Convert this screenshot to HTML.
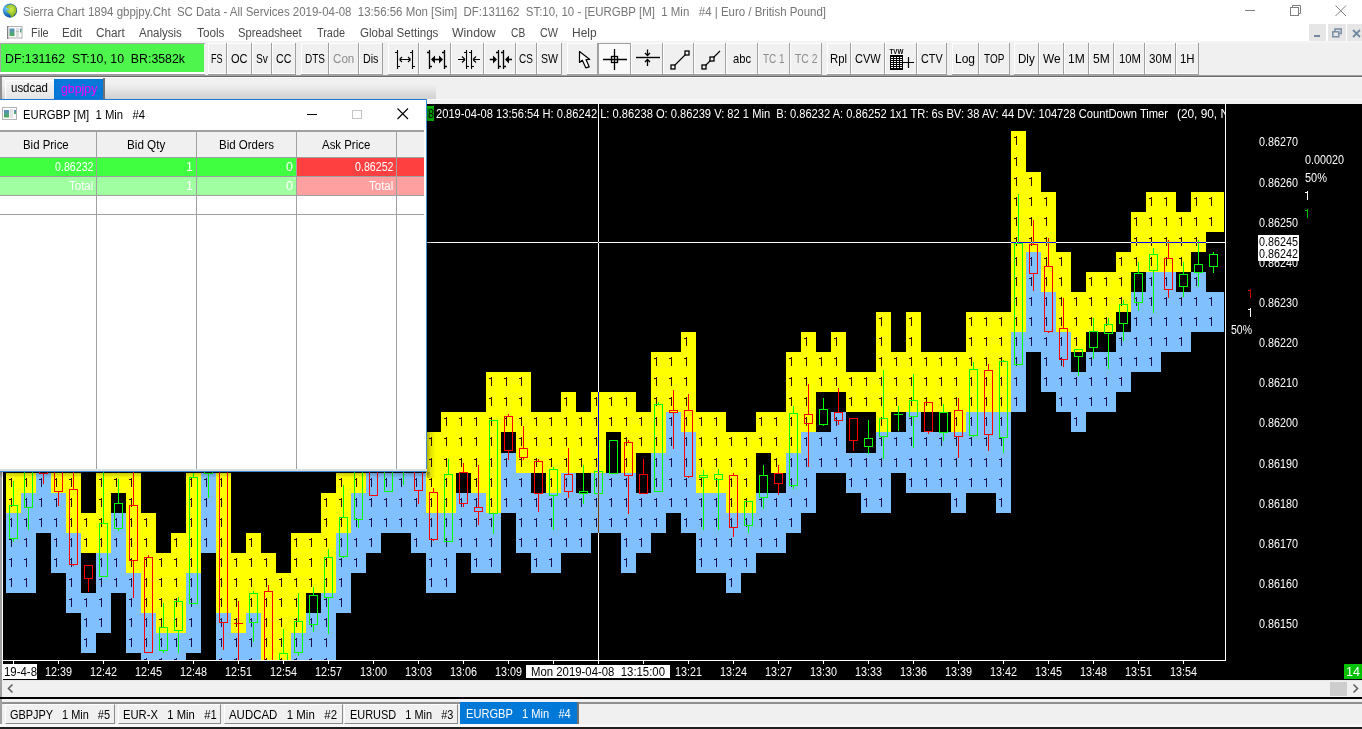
<!DOCTYPE html>
<html><head><meta charset="utf-8"><style>
html,body{margin:0;padding:0;width:1362px;height:729px;overflow:hidden;background:#f0f0f0;font-family:"Liberation Sans",sans-serif;}
div{font-family:"Liberation Sans",sans-serif;}
</style></head><body>
<div style="position:absolute;left:0px;top:0px;width:1362px;height:22px;background:#fff;"></div>
<svg style="position:absolute;left:2px;top:3px" width="16" height="16" viewBox="0 0 16 16"><defs><radialGradient id="gl" cx="0.3" cy="0.35" r="0.75"><stop offset="0" stop-color="#7fd8ff"/><stop offset="0.55" stop-color="#1f78c8"/><stop offset="1" stop-color="#0b3f8f"/></radialGradient><radialGradient id="gg" cx="0.5" cy="0.4" r="0.6"><stop offset="0" stop-color="#d4f050"/><stop offset="1" stop-color="#7aa818"/></radialGradient></defs><circle cx="8" cy="7.6" r="7.1" fill="url(#gl)"/><path d="M4 3.2Q7 0.8 11 1.6Q14.6 3.8 14.6 7.2Q14.2 10.5 12 12.5Q10.5 14.6 9.2 14.2Q8.5 12 7.2 10.5Q5.2 9.8 4.4 8Q5.8 6.4 7.6 6.8Q7 5 5.4 5.2Q4.2 4.6 4 3.2Z" fill="url(#gg)"/></svg>
<div id="title" style="position:absolute;top:3.5px;height:16px;line-height:16px;font-size:12px;color:#767676;white-space:pre;left:23.00px;transform-origin:0 50%;transform:scaleX(0.9550);">Sierra Chart 1894 gbpjpy.Cht  SC Data - All Services 2019-04-08  13:56:56 Mon [Sim]  DF:131162  ST:10, 10 - [EURGBP [M]  1 Min   #4 | Euro / British Pound]</div>
<div style="position:absolute;left:1245px;top:10px;width:10px;height:1px;background:#808080;"></div>
<svg style="position:absolute;left:1289px;top:4px" width="13" height="13"><rect x="1.5" y="3.5" width="8" height="8" fill="none" stroke="#808080"/><path d="M3.5 3.5V1.5H11.5V9.5H9.5" fill="none" stroke="#808080"/></svg>
<svg style="position:absolute;left:1335px;top:5px" width="12" height="12"><path d="M0.5 0.5L11 11M11 0.5L0.5 11" stroke="#808080" stroke-width="1"/></svg>
<div style="position:absolute;left:0px;top:22px;width:1362px;height:19px;background:#fff;"></div>
<svg style="position:absolute;left:7px;top:26px" width="16" height="13"><defs><linearGradient id="mg" x1="0" y1="0" x2="0" y2="1"><stop offset="0" stop-color="#5a8ed0"/><stop offset="1" stop-color="#4caf50"/></linearGradient></defs><rect x="0.5" y="0.5" width="14.5" height="11.5" fill="#fbfbfb" stroke="#b0b0b0"/><rect x="0" y="0" width="1.3" height="13" fill="#808080"/><rect x="2.5" y="2.5" width="5" height="7.5" fill="url(#mg)"/><rect x="9" y="2.5" width="3" height="1" fill="#c0c0c0"/><rect x="9" y="4.5" width="3" height="2" fill="#c0c0c0"/><rect x="9" y="7.5" width="3" height="1" fill="#c0c0c0"/><rect x="9" y="9.5" width="3" height="1" fill="#c0c0c0"/><rect x="13" y="2.5" width="1.5" height="4" fill="url(#mg)"/></svg>
<div id="menu0" style="position:absolute;top:25.0px;height:16.5px;line-height:16.5px;font-size:12.5px;color:#4a4a4a;white-space:pre;left:30.50px;transform-origin:0 50%;transform:scaleX(0.8781);">File</div>
<div id="menu1" style="position:absolute;top:25.0px;height:16.5px;line-height:16.5px;font-size:12.5px;color:#4a4a4a;white-space:pre;left:62.00px;transform-origin:0 50%;transform:scaleX(0.9282);">Edit</div>
<div id="menu2" style="position:absolute;top:25.0px;height:16.5px;line-height:16.5px;font-size:12.5px;color:#4a4a4a;white-space:pre;left:96.00px;transform-origin:0 50%;transform:scaleX(0.9418);">Chart</div>
<div id="menu3" style="position:absolute;top:25.0px;height:16.5px;line-height:16.5px;font-size:12.5px;color:#4a4a4a;white-space:pre;left:139.00px;transform-origin:0 50%;transform:scaleX(0.9174);">Analysis</div>
<div id="menu4" style="position:absolute;top:25.0px;height:16.5px;line-height:16.5px;font-size:12.5px;color:#4a4a4a;white-space:pre;left:196.50px;transform-origin:0 50%;transform:scaleX(0.9422);">Tools</div>
<div id="menu5" style="position:absolute;top:25.0px;height:16.5px;line-height:16.5px;font-size:12.5px;color:#4a4a4a;white-space:pre;left:238.40px;transform-origin:0 50%;transform:scaleX(0.8972);">Spreadsheet</div>
<div id="menu6" style="position:absolute;top:25.0px;height:16.5px;line-height:16.5px;font-size:12.5px;color:#4a4a4a;white-space:pre;left:316.50px;transform-origin:0 50%;transform:scaleX(0.8695);">Trade</div>
<div id="menu7" style="position:absolute;top:25.0px;height:16.5px;line-height:16.5px;font-size:12.5px;color:#4a4a4a;white-space:pre;left:359.50px;transform-origin:0 50%;transform:scaleX(0.9247);">Global Settings</div>
<div id="menu8" style="position:absolute;top:25.0px;height:16.5px;line-height:16.5px;font-size:12.5px;color:#4a4a4a;white-space:pre;left:452.30px;transform-origin:0 50%;transform:scaleX(0.9827);">Window</div>
<div id="menu9" style="position:absolute;top:25.0px;height:16.5px;line-height:16.5px;font-size:12.5px;color:#4a4a4a;white-space:pre;left:510.50px;transform-origin:0 50%;transform:scaleX(0.8173);">CB</div>
<div id="menu10" style="position:absolute;top:25.0px;height:16.5px;line-height:16.5px;font-size:12.5px;color:#4a4a4a;white-space:pre;left:539.70px;transform-origin:0 50%;transform:scaleX(0.8642);">CW</div>
<div id="menu11" style="position:absolute;top:25.0px;height:16.5px;line-height:16.5px;font-size:12.5px;color:#4a4a4a;white-space:pre;left:572.00px;transform-origin:0 50%;transform:scaleX(0.9565);">Help</div>
<div style="position:absolute;left:1309px;top:24px;width:17px;height:17px;background:#e6e6e6;"></div>
<div style="position:absolute;left:1328px;top:24px;width:18px;height:17px;background:#e6e6e6;"></div>
<div style="position:absolute;left:1347px;top:24px;width:15px;height:17px;background:#e6e6e6;"></div>
<div style="position:absolute;left:1314px;top:35px;width:6px;height:2px;background:#7288a0;"></div>
<svg style="position:absolute;left:1332px;top:28px" width="12" height="10"><rect x="0.8" y="3.8" width="6" height="5" fill="none" stroke="#7288a0" stroke-width="1.4"/><path d="M3 3V1H9.2V5.5H7.5" fill="none" stroke="#7288a0" stroke-width="1.4"/></svg>
<svg style="position:absolute;left:1352px;top:29px" width="9" height="9"><path d="M1 1L8 8M8 1L1 8" stroke="#7288a0" stroke-width="1.8"/></svg>
<div style="position:absolute;left:0px;top:41px;width:1362px;height:36px;background:#f0f0f0;"></div>
<div style="position:absolute;left:0px;top:41px;width:1362px;height:2px;background:#f4f4f4;"></div>
<div style="position:absolute;left:0px;top:43px;width:205px;height:1px;background:#a8a8a8;"></div>
<div style="position:absolute;left:0px;top:43px;width:1px;height:29px;background:#a8a8a8;"></div>
<div style="position:absolute;left:1px;top:44px;width:203px;height:28px;background:#4df54d;"></div>
<div id="status" style="position:absolute;top:49.5px;height:17px;line-height:17px;font-size:13px;color:#000;white-space:pre;left:5.00px;transform-origin:0 50%;transform:scaleX(0.9482);">DF:131162  ST:10, 10  BR:3582k</div>
<div style="position:absolute;left:0px;top:75px;width:1362px;height:1px;background:#a0a0a0;"></div>
<div style="position:absolute;left:0px;top:76px;width:1362px;height:1px;background:#6a6a6a;"></div>
<div style="position:absolute;left:0px;top:77px;width:1362px;height:1px;background:#f8f8f8;"></div>
<div style="position:absolute;left:0px;top:72px;width:205px;height:2px;background:#fff;"></div>
<div style="position:absolute;left:0px;top:74px;width:205px;height:1px;background:#a0a0a0;"></div>
<div style="position:absolute;left:208px;top:43px;width:18px;height:31px;background:#f0f0f0;border-left:1px solid #fff;border-top:1px solid #fff;border-bottom:1px solid #fff;box-sizing:border-box;"></div>
<div style="position:absolute;left:226px;top:43px;width:1px;height:32px;background:#a0a0a0;"></div>
<div style="position:absolute;left:208px;top:74px;width:18px;height:1px;background:#a0a0a0;"></div>
<div id="btn0" style="position:absolute;top:49.5px;height:17px;line-height:17px;font-size:13px;color:#000;white-space:pre;left:211.25px;transform-origin:0 50%;transform:scaleX(0.6977);">FS</div>
<div style="position:absolute;left:227px;top:43px;width:24px;height:31px;background:#f0f0f0;border-left:1px solid #fff;border-top:1px solid #fff;border-bottom:1px solid #fff;box-sizing:border-box;"></div>
<div style="position:absolute;left:251px;top:43px;width:1px;height:32px;background:#a0a0a0;"></div>
<div style="position:absolute;left:227px;top:74px;width:24px;height:1px;background:#a0a0a0;"></div>
<div id="btn1" style="position:absolute;top:49.5px;height:17px;line-height:17px;font-size:13px;color:#000;white-space:pre;left:231.15px;transform-origin:0 50%;transform:scaleX(0.8462);">OC</div>
<div style="position:absolute;left:252px;top:43px;width:19px;height:31px;background:#f0f0f0;border-left:1px solid #fff;border-top:1px solid #fff;border-bottom:1px solid #fff;box-sizing:border-box;"></div>
<div style="position:absolute;left:271px;top:43px;width:1px;height:32px;background:#a0a0a0;"></div>
<div style="position:absolute;left:252px;top:74px;width:19px;height:1px;background:#a0a0a0;"></div>
<div id="btn2" style="position:absolute;top:49.5px;height:17px;line-height:17px;font-size:13px;color:#000;white-space:pre;left:256.05px;transform-origin:0 50%;transform:scaleX(0.7843);">Sv</div>
<div style="position:absolute;left:272px;top:43px;width:23px;height:31px;background:#f0f0f0;border-left:1px solid #fff;border-top:1px solid #fff;border-bottom:1px solid #fff;box-sizing:border-box;"></div>
<div style="position:absolute;left:295px;top:43px;width:1px;height:32px;background:#a0a0a0;"></div>
<div style="position:absolute;left:272px;top:74px;width:23px;height:1px;background:#a0a0a0;"></div>
<div id="btn3" style="position:absolute;top:49.5px;height:17px;line-height:17px;font-size:13px;color:#000;white-space:pre;left:276.25px;transform-origin:0 50%;transform:scaleX(0.8200);">CC</div>
<div style="position:absolute;left:301px;top:43px;width:27px;height:31px;background:#f0f0f0;border-left:1px solid #fff;border-top:1px solid #fff;border-bottom:1px solid #fff;box-sizing:border-box;"></div>
<div style="position:absolute;left:328px;top:43px;width:1px;height:32px;background:#a0a0a0;"></div>
<div style="position:absolute;left:301px;top:74px;width:27px;height:1px;background:#a0a0a0;"></div>
<div id="btn4" style="position:absolute;top:49.5px;height:17px;line-height:17px;font-size:13px;color:#000;white-space:pre;left:304.70px;transform-origin:0 50%;transform:scaleX(0.7692);">DTS</div>
<div style="position:absolute;left:329px;top:43px;width:29px;height:31px;background:#f0f0f0;border-left:1px solid #fff;border-top:1px solid #fff;border-bottom:1px solid #fff;box-sizing:border-box;"></div>
<div style="position:absolute;left:358px;top:43px;width:1px;height:32px;background:#a0a0a0;"></div>
<div style="position:absolute;left:329px;top:74px;width:29px;height:1px;background:#a0a0a0;"></div>
<div id="btn5" style="position:absolute;top:49.5px;height:17px;line-height:17px;font-size:13px;color:#8c8c8c;white-space:pre;left:333.30px;transform-origin:0 50%;transform:scaleX(0.8927);">Con</div>
<div style="position:absolute;left:359px;top:43px;width:23px;height:31px;background:#f0f0f0;border-left:1px solid #fff;border-top:1px solid #fff;border-bottom:1px solid #fff;box-sizing:border-box;"></div>
<div style="position:absolute;left:382px;top:43px;width:1px;height:32px;background:#a0a0a0;"></div>
<div style="position:absolute;left:359px;top:74px;width:23px;height:1px;background:#a0a0a0;"></div>
<div id="btn6" style="position:absolute;top:49.5px;height:17px;line-height:17px;font-size:13px;color:#000;white-space:pre;left:363.20px;transform-origin:0 50%;transform:scaleX(0.8200);">Dis</div>
<div style="position:absolute;left:388px;top:43px;width:30px;height:31px;background:#f0f0f0;border-left:1px solid #fff;border-top:1px solid #fff;border-bottom:1px solid #fff;box-sizing:border-box;"></div>
<div style="position:absolute;left:418px;top:43px;width:1px;height:32px;background:#a0a0a0;"></div>
<div style="position:absolute;left:388px;top:74px;width:30px;height:1px;background:#a0a0a0;"></div>
<svg style="position:absolute;left:388px;top:44px" width="32" height="30"><path d="M9.5 6V25M7 8.5H9.5M9.5 22.5H12M24.5 6V25M22 8.5H24.5M24.5 22.5H27M11.5 15.5H22.5M11.5 15.5L14 13M11.5 15.5L14 18M22.5 15.5L20 13M22.5 15.5L20 18" stroke="#000" fill="none" stroke-width="1.1"/></svg>
<div style="position:absolute;left:419px;top:43px;width:31px;height:31px;background:#f0f0f0;border-left:1px solid #fff;border-top:1px solid #fff;border-bottom:1px solid #fff;box-sizing:border-box;"></div>
<div style="position:absolute;left:450px;top:43px;width:1px;height:32px;background:#a0a0a0;"></div>
<div style="position:absolute;left:419px;top:74px;width:31px;height:1px;background:#a0a0a0;"></div>
<svg style="position:absolute;left:419px;top:44px" width="32" height="30"><path d="M10.5 6V25M8 8.5H10.5M10.5 22.5H13M25.5 6V25M23 8.5H25.5M25.5 22.5H28M14 15.5H22" stroke="#000" fill="none" stroke-width="1.3"/><path d="M12 15.5L16 11.5V19.5ZM24 15.5L20 11.5V19.5Z" fill="#000"/></svg>
<div style="position:absolute;left:451px;top:43px;width:32px;height:31px;background:#f0f0f0;border-left:1px solid #fff;border-top:1px solid #fff;border-bottom:1px solid #fff;box-sizing:border-box;"></div>
<div style="position:absolute;left:483px;top:43px;width:1px;height:32px;background:#a0a0a0;"></div>
<div style="position:absolute;left:451px;top:74px;width:32px;height:1px;background:#a0a0a0;"></div>
<svg style="position:absolute;left:451px;top:44px" width="32" height="30"><path d="M15.5 6V25M13 8.5H15.5M15.5 22.5H18M20.5 6V25M18 8.5H20.5M20.5 22.5H23M7 15.5H14M14 15.5L11 12.5M14 15.5L11 18.5M29 15.5H22M22 15.5L25 12.5M22 15.5L25 18.5" stroke="#000" fill="none" stroke-width="1.1"/></svg>
<div style="position:absolute;left:484px;top:43px;width:31px;height:31px;background:#f0f0f0;border-left:1px solid #fff;border-top:1px solid #fff;border-bottom:1px solid #fff;box-sizing:border-box;"></div>
<div style="position:absolute;left:515px;top:43px;width:1px;height:32px;background:#a0a0a0;"></div>
<div style="position:absolute;left:484px;top:74px;width:31px;height:1px;background:#a0a0a0;"></div>
<svg style="position:absolute;left:484px;top:44px" width="32" height="30"><path d="M14.5 6V25M12 8.5H14.5M14.5 22.5H17M19.5 6V25M17 8.5H19.5M19.5 22.5H22M5.8 15.5H10M28 15.5H24" stroke="#000" fill="none" stroke-width="1.3"/><path d="M13 15.5L9 11.5V19.5ZM21 15.5L25 11.5V19.5Z" fill="#000"/></svg>
<div style="position:absolute;left:516px;top:43px;width:20px;height:31px;background:#f0f0f0;border-left:1px solid #fff;border-top:1px solid #fff;border-bottom:1px solid #fff;box-sizing:border-box;"></div>
<div style="position:absolute;left:536px;top:43px;width:1px;height:32px;background:#a0a0a0;"></div>
<div style="position:absolute;left:516px;top:74px;width:20px;height:1px;background:#a0a0a0;"></div>
<div id="btn11" style="position:absolute;top:49.5px;height:17px;line-height:17px;font-size:13px;color:#000;white-space:pre;left:519.10px;transform-origin:0 50%;transform:scaleX(0.7696);">CS</div>
<div style="position:absolute;left:537px;top:43px;width:24px;height:31px;background:#f0f0f0;border-left:1px solid #fff;border-top:1px solid #fff;border-bottom:1px solid #fff;box-sizing:border-box;"></div>
<div style="position:absolute;left:561px;top:43px;width:1px;height:32px;background:#a0a0a0;"></div>
<div style="position:absolute;left:537px;top:74px;width:24px;height:1px;background:#a0a0a0;"></div>
<div id="btn12" style="position:absolute;top:49.5px;height:17px;line-height:17px;font-size:13px;color:#000;white-space:pre;left:540.85px;transform-origin:0 50%;transform:scaleX(0.8113);">SW</div>
<div style="position:absolute;left:567px;top:43px;width:30px;height:31px;background:#f0f0f0;border-left:1px solid #fff;border-top:1px solid #fff;border-bottom:1px solid #fff;box-sizing:border-box;"></div>
<div style="position:absolute;left:597px;top:43px;width:1px;height:32px;background:#a0a0a0;"></div>
<div style="position:absolute;left:567px;top:74px;width:30px;height:1px;background:#a0a0a0;"></div>
<svg style="position:absolute;left:567px;top:44px" width="32" height="30"><path d="M12.5 7.5V18.5L15.3 16.2L18.8 23.8L22.2 22.8L19 15.6L22.8 15.4Z" fill="#fff" stroke="#000" stroke-width="1.2" stroke-linejoin="round"/></svg>
<div style="position:absolute;left:598px;top:43px;width:32px;height:31px;background:#f0f0f0;border-left:1px solid #fff;border-top:1px solid #fff;border-bottom:1px solid #fff;box-sizing:border-box;"></div>
<div style="position:absolute;left:630px;top:43px;width:1px;height:32px;background:#a0a0a0;"></div>
<div style="position:absolute;left:598px;top:74px;width:32px;height:1px;background:#a0a0a0;"></div>
<div style="position:absolute;left:598px;top:43px;width:32px;height:31px;background:#fafafa;border-left:1.5px solid #a0a0a0;border-top:1.5px solid #a0a0a0;box-sizing:border-box"></div>
<svg style="position:absolute;left:598px;top:44px" width="32" height="30"><path d="M16.5 5V26M5 15.5H29" stroke="#000" stroke-width="1.3" fill="none"/><rect x="13.5" y="12.5" width="6" height="6" fill="none" stroke="#000" stroke-width="1.3"/></svg>
<div style="position:absolute;left:631px;top:43px;width:31px;height:31px;background:#f0f0f0;border-left:1px solid #fff;border-top:1px solid #fff;border-bottom:1px solid #fff;box-sizing:border-box;"></div>
<div style="position:absolute;left:662px;top:43px;width:1px;height:32px;background:#a0a0a0;"></div>
<div style="position:absolute;left:631px;top:74px;width:31px;height:1px;background:#a0a0a0;"></div>
<svg style="position:absolute;left:631px;top:44px" width="32" height="30"><path d="M5 13.5H29" stroke="#000" stroke-width="1.4"/><path d="M16.5 5.5V11.5M14 9L16.5 11.5L19 9M16.5 22V15.5M14 18L16.5 15.5L19 18" stroke="#000" stroke-width="1.3" fill="none"/></svg>
<div style="position:absolute;left:663px;top:43px;width:30px;height:31px;background:#f0f0f0;border-left:1px solid #fff;border-top:1px solid #fff;border-bottom:1px solid #fff;box-sizing:border-box;"></div>
<div style="position:absolute;left:693px;top:43px;width:1px;height:32px;background:#a0a0a0;"></div>
<div style="position:absolute;left:663px;top:74px;width:30px;height:1px;background:#a0a0a0;"></div>
<svg style="position:absolute;left:663px;top:44px" width="32" height="30"><path d="M10 23L24 9" stroke="#000" stroke-width="1.1"/><rect x="8" y="21" width="4" height="4" fill="#f0f0f0" stroke="#000" stroke-width="1.3"/><rect x="22" y="7" width="4" height="4" fill="#f0f0f0" stroke="#000" stroke-width="1.3"/></svg>
<div style="position:absolute;left:694px;top:43px;width:31px;height:31px;background:#f0f0f0;border-left:1px solid #fff;border-top:1px solid #fff;border-bottom:1px solid #fff;box-sizing:border-box;"></div>
<div style="position:absolute;left:725px;top:43px;width:1px;height:32px;background:#a0a0a0;"></div>
<div style="position:absolute;left:694px;top:74px;width:31px;height:1px;background:#a0a0a0;"></div>
<svg style="position:absolute;left:694px;top:44px" width="32" height="30"><path d="M10 23L26 7" stroke="#000" stroke-width="1.1"/><rect x="8" y="21" width="4" height="4" fill="#f0f0f0" stroke="#000" stroke-width="1.3"/><rect x="16" y="13" width="4" height="4" fill="#f0f0f0" stroke="#000" stroke-width="1.3"/></svg>
<div style="position:absolute;left:726px;top:43px;width:31px;height:31px;background:#f0f0f0;border-left:1px solid #fff;border-top:1px solid #fff;border-bottom:1px solid #fff;box-sizing:border-box;"></div>
<div style="position:absolute;left:757px;top:43px;width:1px;height:32px;background:#a0a0a0;"></div>
<div style="position:absolute;left:726px;top:74px;width:31px;height:1px;background:#a0a0a0;"></div>
<div id="btn18" style="position:absolute;top:49.5px;height:17px;line-height:17px;font-size:13px;color:#000;white-space:pre;left:732.80px;transform-origin:0 50%;transform:scaleX(0.8584);">abc</div>
<div style="position:absolute;left:758px;top:43px;width:31px;height:31px;background:#f0f0f0;border-left:1px solid #fff;border-top:1px solid #fff;border-bottom:1px solid #fff;box-sizing:border-box;"></div>
<div style="position:absolute;left:789px;top:43px;width:1px;height:32px;background:#a0a0a0;"></div>
<div style="position:absolute;left:758px;top:74px;width:31px;height:1px;background:#a0a0a0;"></div>
<div id="btn19" style="position:absolute;top:49.5px;height:17px;line-height:17px;font-size:13px;color:#8c8c8c;white-space:pre;left:762.80px;transform-origin:0 50%;transform:scaleX(0.7667);">TC 1</div>
<div style="position:absolute;left:790px;top:43px;width:31px;height:31px;background:#f0f0f0;border-left:1px solid #fff;border-top:1px solid #fff;border-bottom:1px solid #fff;box-sizing:border-box;"></div>
<div style="position:absolute;left:821px;top:43px;width:1px;height:32px;background:#a0a0a0;"></div>
<div style="position:absolute;left:790px;top:74px;width:31px;height:1px;background:#a0a0a0;"></div>
<div id="btn20" style="position:absolute;top:49.5px;height:17px;line-height:17px;font-size:13px;color:#8c8c8c;white-space:pre;left:794.60px;transform-origin:0 50%;transform:scaleX(0.7951);">TC 2</div>
<div style="position:absolute;left:827px;top:43px;width:23px;height:31px;background:#f0f0f0;border-left:1px solid #fff;border-top:1px solid #fff;border-bottom:1px solid #fff;box-sizing:border-box;"></div>
<div style="position:absolute;left:850px;top:43px;width:1px;height:32px;background:#a0a0a0;"></div>
<div style="position:absolute;left:827px;top:74px;width:23px;height:1px;background:#a0a0a0;"></div>
<div id="btn21" style="position:absolute;top:49.5px;height:17px;line-height:17px;font-size:13px;color:#000;white-space:pre;left:830.30px;transform-origin:0 50%;transform:scaleX(0.8711);">Rpl</div>
<div style="position:absolute;left:851px;top:43px;width:33px;height:31px;background:#f0f0f0;border-left:1px solid #fff;border-top:1px solid #fff;border-bottom:1px solid #fff;box-sizing:border-box;"></div>
<div style="position:absolute;left:884px;top:43px;width:1px;height:32px;background:#a0a0a0;"></div>
<div style="position:absolute;left:851px;top:74px;width:33px;height:1px;background:#a0a0a0;"></div>
<div id="btn22" style="position:absolute;top:49.5px;height:17px;line-height:17px;font-size:13px;color:#000;white-space:pre;left:855.10px;transform-origin:0 50%;transform:scaleX(0.8470);">CVW</div>
<div style="position:absolute;left:885px;top:43px;width:31px;height:31px;background:#f0f0f0;border-left:1px solid #fff;border-top:1px solid #fff;border-bottom:1px solid #fff;box-sizing:border-box;"></div>
<div style="position:absolute;left:916px;top:43px;width:1px;height:32px;background:#a0a0a0;"></div>
<div style="position:absolute;left:885px;top:74px;width:31px;height:1px;background:#a0a0a0;"></div>
<svg style="position:absolute;left:884px;top:44px" width="32" height="30"><text x="5.5" y="9.8" font-size="6.5" font-family="Liberation Sans" font-weight="bold" fill="#000" textLength="14" lengthAdjust="spacingAndGlyphs">TVW</text><rect x="6" y="11" width="13" height="15" fill="#000"/><rect x="7" y="13" width="2" height="1" fill="#fff"/><rect x="7" y="15" width="2" height="1" fill="#fff"/><rect x="7" y="17" width="2" height="1" fill="#fff"/><rect x="7" y="19" width="2" height="1" fill="#fff"/><rect x="7" y="21" width="2" height="1" fill="#fff"/><rect x="7" y="23" width="2" height="1" fill="#fff"/><rect x="10" y="13" width="2" height="1" fill="#fff"/><rect x="10" y="15" width="2" height="1" fill="#fff"/><rect x="10" y="17" width="2" height="1" fill="#fff"/><rect x="10" y="19" width="2" height="1" fill="#fff"/><rect x="10" y="21" width="2" height="1" fill="#fff"/><rect x="10" y="23" width="2" height="1" fill="#fff"/><rect x="13" y="13" width="2" height="1" fill="#fff"/><rect x="13" y="15" width="2" height="1" fill="#fff"/><rect x="13" y="17" width="2" height="1" fill="#fff"/><rect x="13" y="19" width="2" height="1" fill="#fff"/><rect x="13" y="21" width="2" height="1" fill="#fff"/><rect x="13" y="23" width="2" height="1" fill="#fff"/><rect x="16" y="13" width="2" height="1" fill="#fff"/><rect x="16" y="15" width="2" height="1" fill="#fff"/><rect x="16" y="17" width="2" height="1" fill="#fff"/><rect x="16" y="19" width="2" height="1" fill="#fff"/><rect x="16" y="21" width="2" height="1" fill="#fff"/><rect x="16" y="23" width="2" height="1" fill="#fff"/><path d="M19 18.5H30M24.5 13V24" stroke="#000" stroke-width="1.2"/></svg>
<div style="position:absolute;left:917px;top:43px;width:29px;height:31px;background:#f0f0f0;border-left:1px solid #fff;border-top:1px solid #fff;border-bottom:1px solid #fff;box-sizing:border-box;"></div>
<div style="position:absolute;left:946px;top:43px;width:1px;height:32px;background:#a0a0a0;"></div>
<div style="position:absolute;left:917px;top:74px;width:29px;height:1px;background:#a0a0a0;"></div>
<div id="btn24" style="position:absolute;top:49.5px;height:17px;line-height:17px;font-size:13px;color:#000;white-space:pre;left:921.20px;transform-origin:0 50%;transform:scaleX(0.8308);">CTV</div>
<div style="position:absolute;left:952px;top:43px;width:26px;height:31px;background:#f0f0f0;border-left:1px solid #fff;border-top:1px solid #fff;border-bottom:1px solid #fff;box-sizing:border-box;"></div>
<div style="position:absolute;left:978px;top:43px;width:1px;height:32px;background:#a0a0a0;"></div>
<div style="position:absolute;left:952px;top:74px;width:26px;height:1px;background:#a0a0a0;"></div>
<div id="btn25" style="position:absolute;top:49.5px;height:17px;line-height:17px;font-size:13px;color:#000;white-space:pre;left:955.15px;transform-origin:0 50%;transform:scaleX(0.9215);">Log</div>
<div style="position:absolute;left:979px;top:43px;width:30px;height:31px;background:#f0f0f0;border-left:1px solid #fff;border-top:1px solid #fff;border-bottom:1px solid #fff;box-sizing:border-box;"></div>
<div style="position:absolute;left:1009px;top:43px;width:1px;height:32px;background:#a0a0a0;"></div>
<div style="position:absolute;left:979px;top:74px;width:30px;height:1px;background:#a0a0a0;"></div>
<div id="btn26" style="position:absolute;top:49.5px;height:17px;line-height:17px;font-size:13px;color:#000;white-space:pre;left:984.25px;transform-origin:0 50%;transform:scaleX(0.7660);">TOP</div>
<div style="position:absolute;left:1014px;top:43px;width:24px;height:31px;background:#f0f0f0;border-left:1px solid #fff;border-top:1px solid #fff;border-bottom:1px solid #fff;box-sizing:border-box;"></div>
<div style="position:absolute;left:1038px;top:43px;width:1px;height:32px;background:#a0a0a0;"></div>
<div style="position:absolute;left:1014px;top:74px;width:24px;height:1px;background:#a0a0a0;"></div>
<div id="btn27" style="position:absolute;top:49.5px;height:17px;line-height:17px;font-size:13px;color:#000;white-space:pre;left:1018.00px;transform-origin:0 50%;transform:scaleX(0.8892);">Dly</div>
<div style="position:absolute;left:1039px;top:43px;width:24px;height:31px;background:#f0f0f0;border-left:1px solid #fff;border-top:1px solid #fff;border-bottom:1px solid #fff;box-sizing:border-box;"></div>
<div style="position:absolute;left:1063px;top:43px;width:1px;height:32px;background:#a0a0a0;"></div>
<div style="position:absolute;left:1039px;top:74px;width:24px;height:1px;background:#a0a0a0;"></div>
<div id="btn28" style="position:absolute;top:49.5px;height:17px;line-height:17px;font-size:13px;color:#000;white-space:pre;left:1042.50px;transform-origin:0 50%;transform:scaleX(0.9135);">We</div>
<div style="position:absolute;left:1064px;top:43px;width:24px;height:31px;background:#f0f0f0;border-left:1px solid #fff;border-top:1px solid #fff;border-bottom:1px solid #fff;box-sizing:border-box;"></div>
<div style="position:absolute;left:1088px;top:43px;width:1px;height:32px;background:#a0a0a0;"></div>
<div style="position:absolute;left:1064px;top:74px;width:24px;height:1px;background:#a0a0a0;"></div>
<div id="btn29" style="position:absolute;top:49.5px;height:17px;line-height:17px;font-size:13px;color:#000;white-space:pre;left:1068.05px;transform-origin:0 50%;transform:scaleX(0.9246);">1M</div>
<div style="position:absolute;left:1089px;top:43px;width:24px;height:31px;background:#f0f0f0;border-left:1px solid #fff;border-top:1px solid #fff;border-bottom:1px solid #fff;box-sizing:border-box;"></div>
<div style="position:absolute;left:1113px;top:43px;width:1px;height:32px;background:#a0a0a0;"></div>
<div style="position:absolute;left:1089px;top:74px;width:24px;height:1px;background:#a0a0a0;"></div>
<div id="btn30" style="position:absolute;top:49.5px;height:17px;line-height:17px;font-size:13px;color:#000;white-space:pre;left:1093.10px;transform-origin:0 50%;transform:scaleX(0.9246);">5M</div>
<div style="position:absolute;left:1114px;top:43px;width:30px;height:31px;background:#f0f0f0;border-left:1px solid #fff;border-top:1px solid #fff;border-bottom:1px solid #fff;box-sizing:border-box;"></div>
<div style="position:absolute;left:1144px;top:43px;width:1px;height:32px;background:#a0a0a0;"></div>
<div style="position:absolute;left:1114px;top:74px;width:30px;height:1px;background:#a0a0a0;"></div>
<div id="btn31" style="position:absolute;top:49.5px;height:17px;line-height:17px;font-size:13px;color:#000;white-space:pre;left:1118.50px;transform-origin:0 50%;transform:scaleX(0.8697);">10M</div>
<div style="position:absolute;left:1145px;top:43px;width:30px;height:31px;background:#f0f0f0;border-left:1px solid #fff;border-top:1px solid #fff;border-bottom:1px solid #fff;box-sizing:border-box;"></div>
<div style="position:absolute;left:1175px;top:43px;width:1px;height:32px;background:#a0a0a0;"></div>
<div style="position:absolute;left:1145px;top:74px;width:30px;height:1px;background:#a0a0a0;"></div>
<div id="btn32" style="position:absolute;top:49.5px;height:17px;line-height:17px;font-size:13px;color:#000;white-space:pre;left:1149.00px;transform-origin:0 50%;transform:scaleX(0.8934);">30M</div>
<div style="position:absolute;left:1176px;top:43px;width:22px;height:31px;background:#f0f0f0;border-left:1px solid #fff;border-top:1px solid #fff;border-bottom:1px solid #fff;box-sizing:border-box;"></div>
<div style="position:absolute;left:1198px;top:43px;width:1px;height:32px;background:#a0a0a0;"></div>
<div style="position:absolute;left:1176px;top:74px;width:22px;height:1px;background:#a0a0a0;"></div>
<div id="btn33" style="position:absolute;top:49.5px;height:17px;line-height:17px;font-size:13px;color:#000;white-space:pre;left:1179.90px;transform-origin:0 50%;transform:scaleX(0.8782);">1H</div>
<div style="position:absolute;left:0px;top:78px;width:1362px;height:21px;background:#f0f0f0;"></div>
<div style="position:absolute;left:0px;top:84px;width:436px;height:15px;background:linear-gradient(rgba(0,0,0,0), rgba(0,0,0,0.13));"></div>
<div style="position:absolute;left:0px;top:77px;width:1.5px;height:22px;background:#909090;"></div>
<div style="position:absolute;left:5px;top:80px;width:49px;height:19px;background:linear-gradient(#f6f6f6,#e4e4e4);border-left:1px solid #fff;border-top:1px solid #fff;box-sizing:border-box"></div>
<div id="tab_usd" style="position:absolute;top:80.0px;height:16.5px;line-height:16.5px;font-size:12.5px;color:#000;white-space:pre;left:10.50px;transform-origin:0 50%;transform:scaleX(0.9178);">usdcad</div>
<div style="position:absolute;left:54px;top:79px;width:49px;height:20px;background:#0078d7;"></div>
<div style="position:absolute;left:103px;top:78px;width:2px;height:21px;background:#707070;"></div>
<div id="tab_gbp" style="position:absolute;top:80.5px;height:16.5px;line-height:16.5px;font-size:12.5px;color:#ff00ff;white-space:pre;left:61.00px;transform-origin:0 50%;transform:scaleX(0.9852);">gbpjpy</div>
<div style="position:absolute;left:427px;top:99px;width:935px;height:5px;background:#f0f0f0;"></div>
<div style="position:absolute;left:427px;top:99px;width:935px;height:1px;background:#fafafa;"></div>
<div style="position:absolute;left:0px;top:104px;width:1362px;height:576px;background:#000;"></div>
<div style="position:absolute;left:0px;top:99px;width:1.5px;height:630px;background:#a0a0a0;"></div>
<div style="position:absolute;left:1.5px;top:104px;width:1.5px;height:576px;background:#fff;"></div>
<svg style="position:absolute;left:0;top:0" width="1362" height="729" font-family="Liberation Sans">
<defs><clipPath id="cc"><rect x="3" y="104" width="1221" height="556"/></clipPath></defs>
<g clip-path="url(#cc)">
<rect x="6" y="473" width="15" height="40" fill="#ffff00"/>
<rect x="6" y="513" width="15" height="80" fill="#80c0ff"/>
<rect x="21" y="473" width="15" height="20" fill="#ffff00"/>
<rect x="21" y="493" width="15" height="100" fill="#80c0ff"/>
<rect x="36" y="473" width="15" height="60" fill="#80c0ff"/>
<rect x="51" y="473" width="15" height="20" fill="#ffff00"/>
<rect x="51" y="493" width="15" height="80" fill="#80c0ff"/>
<rect x="66" y="473" width="15" height="60" fill="#ffff00"/>
<rect x="66" y="533" width="15" height="80" fill="#80c0ff"/>
<rect x="81" y="513" width="15" height="40" fill="#ffff00"/>
<rect x="81" y="593" width="15" height="60" fill="#80c0ff"/>
<rect x="96" y="473" width="15" height="80" fill="#ffff00"/>
<rect x="96" y="553" width="15" height="80" fill="#80c0ff"/>
<rect x="111" y="473" width="15" height="20" fill="#ffff00"/>
<rect x="111" y="513" width="15" height="80" fill="#80c0ff"/>
<rect x="126" y="473" width="15" height="100" fill="#ffff00"/>
<rect x="126" y="573" width="15" height="80" fill="#80c0ff"/>
<rect x="141" y="513" width="15" height="100" fill="#ffff00"/>
<rect x="141" y="613" width="15" height="60" fill="#80c0ff"/>
<rect x="156" y="553" width="15" height="80" fill="#ffff00"/>
<rect x="156" y="633" width="15" height="40" fill="#80c0ff"/>
<rect x="171" y="533" width="15" height="100" fill="#ffff00"/>
<rect x="171" y="633" width="15" height="40" fill="#80c0ff"/>
<rect x="186" y="473" width="15" height="100" fill="#ffff00"/>
<rect x="186" y="573" width="15" height="80" fill="#80c0ff"/>
<rect x="201" y="473" width="15" height="80" fill="#80c0ff"/>
<rect x="216" y="473" width="15" height="140" fill="#ffff00"/>
<rect x="216" y="613" width="15" height="60" fill="#80c0ff"/>
<rect x="231" y="553" width="15" height="80" fill="#ffff00"/>
<rect x="231" y="633" width="15" height="40" fill="#80c0ff"/>
<rect x="246" y="533" width="15" height="80" fill="#ffff00"/>
<rect x="246" y="613" width="15" height="60" fill="#80c0ff"/>
<rect x="261" y="553" width="15" height="120" fill="#ffff00"/>
<rect x="276" y="573" width="15" height="100" fill="#ffff00"/>
<rect x="291" y="533" width="15" height="100" fill="#ffff00"/>
<rect x="291" y="633" width="15" height="40" fill="#80c0ff"/>
<rect x="306" y="533" width="15" height="60" fill="#ffff00"/>
<rect x="306" y="613" width="15" height="60" fill="#80c0ff"/>
<rect x="321" y="493" width="15" height="100" fill="#ffff00"/>
<rect x="321" y="593" width="15" height="80" fill="#80c0ff"/>
<rect x="336" y="473" width="15" height="60" fill="#ffff00"/>
<rect x="336" y="533" width="15" height="80" fill="#80c0ff"/>
<rect x="351" y="473" width="15" height="20" fill="#ffff00"/>
<rect x="351" y="493" width="15" height="80" fill="#80c0ff"/>
<rect x="366" y="473" width="15" height="80" fill="#80c0ff"/>
<rect x="381" y="473" width="15" height="60" fill="#80c0ff"/>
<rect x="396" y="473" width="15" height="60" fill="#80c0ff"/>
<rect x="411" y="473" width="15" height="80" fill="#80c0ff"/>
<rect x="426" y="432" width="15" height="81" fill="#ffff00"/>
<rect x="426" y="513" width="15" height="80" fill="#80c0ff"/>
<rect x="441" y="412" width="15" height="101" fill="#ffff00"/>
<rect x="441" y="513" width="15" height="80" fill="#80c0ff"/>
<rect x="456" y="412" width="15" height="61" fill="#ffff00"/>
<rect x="456" y="493" width="15" height="60" fill="#80c0ff"/>
<rect x="471" y="412" width="15" height="81" fill="#ffff00"/>
<rect x="471" y="493" width="15" height="80" fill="#80c0ff"/>
<rect x="486" y="372" width="15" height="141" fill="#ffff00"/>
<rect x="486" y="513" width="15" height="60" fill="#80c0ff"/>
<rect x="501" y="372" width="15" height="60" fill="#ffff00"/>
<rect x="501" y="453" width="15" height="60" fill="#80c0ff"/>
<rect x="516" y="372" width="15" height="101" fill="#ffff00"/>
<rect x="516" y="473" width="15" height="80" fill="#80c0ff"/>
<rect x="531" y="412" width="15" height="61" fill="#ffff00"/>
<rect x="531" y="493" width="15" height="80" fill="#80c0ff"/>
<rect x="546" y="412" width="15" height="81" fill="#ffff00"/>
<rect x="546" y="493" width="15" height="80" fill="#80c0ff"/>
<rect x="561" y="392" width="15" height="81" fill="#ffff00"/>
<rect x="561" y="473" width="15" height="80" fill="#80c0ff"/>
<rect x="576" y="412" width="15" height="61" fill="#ffff00"/>
<rect x="576" y="493" width="15" height="60" fill="#80c0ff"/>
<rect x="591" y="392" width="15" height="81" fill="#ffff00"/>
<rect x="591" y="473" width="15" height="60" fill="#80c0ff"/>
<rect x="606" y="392" width="15" height="40" fill="#ffff00"/>
<rect x="606" y="473" width="15" height="60" fill="#80c0ff"/>
<rect x="621" y="392" width="15" height="81" fill="#ffff00"/>
<rect x="621" y="473" width="15" height="100" fill="#80c0ff"/>
<rect x="636" y="412" width="15" height="41" fill="#ffff00"/>
<rect x="636" y="493" width="15" height="60" fill="#80c0ff"/>
<rect x="651" y="352" width="15" height="101" fill="#ffff00"/>
<rect x="651" y="453" width="15" height="80" fill="#80c0ff"/>
<rect x="666" y="352" width="15" height="60" fill="#ffff00"/>
<rect x="666" y="412" width="15" height="101" fill="#80c0ff"/>
<rect x="681" y="332" width="15" height="100" fill="#ffff00"/>
<rect x="681" y="432" width="15" height="101" fill="#80c0ff"/>
<rect x="696" y="412" width="15" height="81" fill="#ffff00"/>
<rect x="696" y="493" width="15" height="80" fill="#80c0ff"/>
<rect x="711" y="412" width="15" height="81" fill="#ffff00"/>
<rect x="711" y="493" width="15" height="80" fill="#80c0ff"/>
<rect x="726" y="432" width="15" height="81" fill="#ffff00"/>
<rect x="726" y="513" width="15" height="80" fill="#80c0ff"/>
<rect x="741" y="432" width="15" height="81" fill="#ffff00"/>
<rect x="741" y="513" width="15" height="60" fill="#80c0ff"/>
<rect x="756" y="412" width="15" height="41" fill="#ffff00"/>
<rect x="756" y="493" width="15" height="60" fill="#80c0ff"/>
<rect x="771" y="412" width="15" height="61" fill="#ffff00"/>
<rect x="771" y="493" width="15" height="60" fill="#80c0ff"/>
<rect x="786" y="352" width="15" height="101" fill="#ffff00"/>
<rect x="786" y="453" width="15" height="80" fill="#80c0ff"/>
<rect x="801" y="332" width="15" height="100" fill="#ffff00"/>
<rect x="801" y="432" width="15" height="81" fill="#80c0ff"/>
<rect x="816" y="352" width="15" height="40" fill="#ffff00"/>
<rect x="816" y="432" width="15" height="41" fill="#80c0ff"/>
<rect x="831" y="332" width="15" height="60" fill="#ffff00"/>
<rect x="831" y="412" width="15" height="61" fill="#80c0ff"/>
<rect x="846" y="372" width="15" height="40" fill="#ffff00"/>
<rect x="846" y="453" width="15" height="40" fill="#80c0ff"/>
<rect x="861" y="372" width="15" height="40" fill="#ffff00"/>
<rect x="861" y="453" width="15" height="60" fill="#80c0ff"/>
<rect x="876" y="312" width="15" height="120" fill="#ffff00"/>
<rect x="876" y="432" width="15" height="81" fill="#80c0ff"/>
<rect x="891" y="352" width="15" height="60" fill="#ffff00"/>
<rect x="891" y="432" width="15" height="41" fill="#80c0ff"/>
<rect x="906" y="312" width="15" height="100" fill="#ffff00"/>
<rect x="906" y="412" width="15" height="81" fill="#80c0ff"/>
<rect x="921" y="352" width="15" height="60" fill="#ffff00"/>
<rect x="921" y="432" width="15" height="61" fill="#80c0ff"/>
<rect x="936" y="352" width="15" height="60" fill="#ffff00"/>
<rect x="936" y="432" width="15" height="61" fill="#80c0ff"/>
<rect x="951" y="352" width="15" height="80" fill="#ffff00"/>
<rect x="951" y="432" width="15" height="81" fill="#80c0ff"/>
<rect x="966" y="312" width="15" height="100" fill="#ffff00"/>
<rect x="966" y="412" width="15" height="81" fill="#80c0ff"/>
<rect x="981" y="312" width="15" height="100" fill="#ffff00"/>
<rect x="981" y="412" width="15" height="81" fill="#80c0ff"/>
<rect x="996" y="312" width="15" height="100" fill="#ffff00"/>
<rect x="996" y="412" width="15" height="101" fill="#80c0ff"/>
<rect x="1011" y="131" width="15" height="201" fill="#ffff00"/>
<rect x="1011" y="332" width="15" height="80" fill="#80c0ff"/>
<rect x="1026" y="172" width="15" height="80" fill="#ffff00"/>
<rect x="1026" y="252" width="15" height="100" fill="#80c0ff"/>
<rect x="1041" y="192" width="15" height="100" fill="#ffff00"/>
<rect x="1041" y="292" width="15" height="100" fill="#80c0ff"/>
<rect x="1056" y="252" width="15" height="80" fill="#ffff00"/>
<rect x="1056" y="332" width="15" height="80" fill="#80c0ff"/>
<rect x="1071" y="292" width="15" height="60" fill="#ffff00"/>
<rect x="1071" y="372" width="15" height="60" fill="#80c0ff"/>
<rect x="1086" y="272" width="15" height="60" fill="#ffff00"/>
<rect x="1086" y="352" width="15" height="60" fill="#80c0ff"/>
<rect x="1101" y="272" width="15" height="60" fill="#ffff00"/>
<rect x="1101" y="352" width="15" height="60" fill="#80c0ff"/>
<rect x="1116" y="252" width="15" height="60" fill="#ffff00"/>
<rect x="1116" y="332" width="15" height="60" fill="#80c0ff"/>
<rect x="1131" y="212" width="15" height="60" fill="#ffff00"/>
<rect x="1131" y="292" width="15" height="80" fill="#80c0ff"/>
<rect x="1146" y="192" width="15" height="80" fill="#ffff00"/>
<rect x="1146" y="272" width="15" height="100" fill="#80c0ff"/>
<rect x="1161" y="192" width="15" height="80" fill="#ffff00"/>
<rect x="1161" y="272" width="15" height="80" fill="#80c0ff"/>
<rect x="1176" y="212" width="15" height="60" fill="#ffff00"/>
<rect x="1176" y="292" width="15" height="60" fill="#80c0ff"/>
<rect x="1191" y="192" width="15" height="60" fill="#ffff00"/>
<rect x="1191" y="272" width="15" height="60" fill="#80c0ff"/>
<rect x="1206" y="192" width="15" height="40" fill="#ffff00"/>
<rect x="1206" y="292" width="15" height="40" fill="#80c0ff"/>
<rect x="1221" y="192" width="15" height="40" fill="#ffff00"/>
<rect x="1221" y="292" width="15" height="40" fill="#80c0ff"/>
<path fill="#3a0a00" d="M11 478h1v9h-1zM9 479h2v1h-2zM11 498h1v9h-1zM9 499h2v1h-2zM26 478h1v9h-1zM24 479h2v1h-2zM56 478h1v9h-1zM54 479h2v1h-2zM71 478h1v9h-1zM69 479h2v1h-2zM71 498h1v9h-1zM69 499h2v1h-2zM71 518h1v9h-1zM69 519h2v1h-2zM86 518h1v9h-1zM84 519h2v1h-2zM86 538h1v9h-1zM84 539h2v1h-2zM101 478h1v9h-1zM99 479h2v1h-2zM101 498h1v9h-1zM99 499h2v1h-2zM101 518h1v9h-1zM99 519h2v1h-2zM101 538h1v9h-1zM99 539h2v1h-2zM116 478h1v9h-1zM114 479h2v1h-2zM131 478h1v9h-1zM129 479h2v1h-2zM131 498h1v9h-1zM129 499h2v1h-2zM131 518h1v9h-1zM129 519h2v1h-2zM131 538h1v9h-1zM129 539h2v1h-2zM131 558h1v9h-1zM129 559h2v1h-2zM146 518h1v9h-1zM144 519h2v1h-2zM146 538h1v9h-1zM144 539h2v1h-2zM146 558h1v9h-1zM144 559h2v1h-2zM146 578h1v9h-1zM144 579h2v1h-2zM146 598h1v9h-1zM144 599h2v1h-2zM161 558h1v9h-1zM159 559h2v1h-2zM161 578h1v9h-1zM159 579h2v1h-2zM161 598h1v9h-1zM159 599h2v1h-2zM161 618h1v9h-1zM159 619h2v1h-2zM176 538h1v9h-1zM174 539h2v1h-2zM176 558h1v9h-1zM174 559h2v1h-2zM176 578h1v9h-1zM174 579h2v1h-2zM176 598h1v9h-1zM174 599h2v1h-2zM176 618h1v9h-1zM174 619h2v1h-2zM191 478h1v9h-1zM189 479h2v1h-2zM191 498h1v9h-1zM189 499h2v1h-2zM191 518h1v9h-1zM189 519h2v1h-2zM191 538h1v9h-1zM189 539h2v1h-2zM191 558h1v9h-1zM189 559h2v1h-2zM221 478h1v9h-1zM219 479h2v1h-2zM221 498h1v9h-1zM219 499h2v1h-2zM221 518h1v9h-1zM219 519h2v1h-2zM221 538h1v9h-1zM219 539h2v1h-2zM221 558h1v9h-1zM219 559h2v1h-2zM221 578h1v9h-1zM219 579h2v1h-2zM221 598h1v9h-1zM219 599h2v1h-2zM236 558h1v9h-1zM234 559h2v1h-2zM236 578h1v9h-1zM234 579h2v1h-2zM236 598h1v9h-1zM234 599h2v1h-2zM236 618h1v9h-1zM234 619h2v1h-2zM251 538h1v9h-1zM249 539h2v1h-2zM251 558h1v9h-1zM249 559h2v1h-2zM251 578h1v9h-1zM249 579h2v1h-2zM251 598h1v9h-1zM249 599h2v1h-2zM266 558h1v9h-1zM264 559h2v1h-2zM266 578h1v9h-1zM264 579h2v1h-2zM266 598h1v9h-1zM264 599h2v1h-2zM266 618h1v9h-1zM264 619h2v1h-2zM266 638h1v9h-1zM264 639h2v1h-2zM266 658h1v9h-1zM264 659h2v1h-2zM281 578h1v9h-1zM279 579h2v1h-2zM281 598h1v9h-1zM279 599h2v1h-2zM281 618h1v9h-1zM279 619h2v1h-2zM281 638h1v9h-1zM279 639h2v1h-2zM281 658h1v9h-1zM279 659h2v1h-2zM296 538h1v9h-1zM294 539h2v1h-2zM296 558h1v9h-1zM294 559h2v1h-2zM296 578h1v9h-1zM294 579h2v1h-2zM296 598h1v9h-1zM294 599h2v1h-2zM296 618h1v9h-1zM294 619h2v1h-2zM311 538h1v9h-1zM309 539h2v1h-2zM311 558h1v9h-1zM309 559h2v1h-2zM311 578h1v9h-1zM309 579h2v1h-2zM326 498h1v9h-1zM324 499h2v1h-2zM326 518h1v9h-1zM324 519h2v1h-2zM326 538h1v9h-1zM324 539h2v1h-2zM326 558h1v9h-1zM324 559h2v1h-2zM326 578h1v9h-1zM324 579h2v1h-2zM341 478h1v9h-1zM339 479h2v1h-2zM341 498h1v9h-1zM339 499h2v1h-2zM341 518h1v9h-1zM339 519h2v1h-2zM356 478h1v9h-1zM354 479h2v1h-2zM431 437h1v9h-1zM429 438h2v1h-2zM431 458h1v9h-1zM429 459h2v1h-2zM431 478h1v9h-1zM429 479h2v1h-2zM431 498h1v9h-1zM429 499h2v1h-2zM446 417h1v9h-1zM444 418h2v1h-2zM446 437h1v9h-1zM444 438h2v1h-2zM446 458h1v9h-1zM444 459h2v1h-2zM446 478h1v9h-1zM444 479h2v1h-2zM446 498h1v9h-1zM444 499h2v1h-2zM461 417h1v9h-1zM459 418h2v1h-2zM461 437h1v9h-1zM459 438h2v1h-2zM461 458h1v9h-1zM459 459h2v1h-2zM476 417h1v9h-1zM474 418h2v1h-2zM476 437h1v9h-1zM474 438h2v1h-2zM476 458h1v9h-1zM474 459h2v1h-2zM476 478h1v9h-1zM474 479h2v1h-2zM491 377h1v9h-1zM489 378h2v1h-2zM491 397h1v9h-1zM489 398h2v1h-2zM491 417h1v9h-1zM489 418h2v1h-2zM491 437h1v9h-1zM489 438h2v1h-2zM491 458h1v9h-1zM489 459h2v1h-2zM491 478h1v9h-1zM489 479h2v1h-2zM491 498h1v9h-1zM489 499h2v1h-2zM506 377h1v9h-1zM504 378h2v1h-2zM506 397h1v9h-1zM504 398h2v1h-2zM506 417h1v9h-1zM504 418h2v1h-2zM521 377h1v9h-1zM519 378h2v1h-2zM521 397h1v9h-1zM519 398h2v1h-2zM521 417h1v9h-1zM519 418h2v1h-2zM521 437h1v9h-1zM519 438h2v1h-2zM521 458h1v9h-1zM519 459h2v1h-2zM536 417h1v9h-1zM534 418h2v1h-2zM536 437h1v9h-1zM534 438h2v1h-2zM536 458h1v9h-1zM534 459h2v1h-2zM551 417h1v9h-1zM549 418h2v1h-2zM551 437h1v9h-1zM549 438h2v1h-2zM551 458h1v9h-1zM549 459h2v1h-2zM551 478h1v9h-1zM549 479h2v1h-2zM566 397h1v9h-1zM564 398h2v1h-2zM566 417h1v9h-1zM564 418h2v1h-2zM566 437h1v9h-1zM564 438h2v1h-2zM566 458h1v9h-1zM564 459h2v1h-2zM581 417h1v9h-1zM579 418h2v1h-2zM581 437h1v9h-1zM579 438h2v1h-2zM581 458h1v9h-1zM579 459h2v1h-2zM596 397h1v9h-1zM594 398h2v1h-2zM596 417h1v9h-1zM594 418h2v1h-2zM596 437h1v9h-1zM594 438h2v1h-2zM596 458h1v9h-1zM594 459h2v1h-2zM611 397h1v9h-1zM609 398h2v1h-2zM611 417h1v9h-1zM609 418h2v1h-2zM626 397h1v9h-1zM624 398h2v1h-2zM626 417h1v9h-1zM624 418h2v1h-2zM626 437h1v9h-1zM624 438h2v1h-2zM626 458h1v9h-1zM624 459h2v1h-2zM641 417h1v9h-1zM639 418h2v1h-2zM641 437h1v9h-1zM639 438h2v1h-2zM656 357h1v9h-1zM654 358h2v1h-2zM656 377h1v9h-1zM654 378h2v1h-2zM656 397h1v9h-1zM654 398h2v1h-2zM656 417h1v9h-1zM654 418h2v1h-2zM656 437h1v9h-1zM654 438h2v1h-2zM671 357h1v9h-1zM669 358h2v1h-2zM671 377h1v9h-1zM669 378h2v1h-2zM671 397h1v9h-1zM669 398h2v1h-2zM686 337h1v9h-1zM684 338h2v1h-2zM686 357h1v9h-1zM684 358h2v1h-2zM686 377h1v9h-1zM684 378h2v1h-2zM686 397h1v9h-1zM684 398h2v1h-2zM686 417h1v9h-1zM684 418h2v1h-2zM701 417h1v9h-1zM699 418h2v1h-2zM701 437h1v9h-1zM699 438h2v1h-2zM701 458h1v9h-1zM699 459h2v1h-2zM701 478h1v9h-1zM699 479h2v1h-2zM716 417h1v9h-1zM714 418h2v1h-2zM716 437h1v9h-1zM714 438h2v1h-2zM716 458h1v9h-1zM714 459h2v1h-2zM716 478h1v9h-1zM714 479h2v1h-2zM731 437h1v9h-1zM729 438h2v1h-2zM731 458h1v9h-1zM729 459h2v1h-2zM731 478h1v9h-1zM729 479h2v1h-2zM731 498h1v9h-1zM729 499h2v1h-2zM746 437h1v9h-1zM744 438h2v1h-2zM746 458h1v9h-1zM744 459h2v1h-2zM746 478h1v9h-1zM744 479h2v1h-2zM746 498h1v9h-1zM744 499h2v1h-2zM761 417h1v9h-1zM759 418h2v1h-2zM761 437h1v9h-1zM759 438h2v1h-2zM776 417h1v9h-1zM774 418h2v1h-2zM776 437h1v9h-1zM774 438h2v1h-2zM776 458h1v9h-1zM774 459h2v1h-2zM791 357h1v9h-1zM789 358h2v1h-2zM791 377h1v9h-1zM789 378h2v1h-2zM791 397h1v9h-1zM789 398h2v1h-2zM791 417h1v9h-1zM789 418h2v1h-2zM791 437h1v9h-1zM789 438h2v1h-2zM806 337h1v9h-1zM804 338h2v1h-2zM806 357h1v9h-1zM804 358h2v1h-2zM806 377h1v9h-1zM804 378h2v1h-2zM806 397h1v9h-1zM804 398h2v1h-2zM806 417h1v9h-1zM804 418h2v1h-2zM821 357h1v9h-1zM819 358h2v1h-2zM821 377h1v9h-1zM819 378h2v1h-2zM836 337h1v9h-1zM834 338h2v1h-2zM836 357h1v9h-1zM834 358h2v1h-2zM836 377h1v9h-1zM834 378h2v1h-2zM851 377h1v9h-1zM849 378h2v1h-2zM851 397h1v9h-1zM849 398h2v1h-2zM866 377h1v9h-1zM864 378h2v1h-2zM866 397h1v9h-1zM864 398h2v1h-2zM881 317h1v9h-1zM879 318h2v1h-2zM881 337h1v9h-1zM879 338h2v1h-2zM881 357h1v9h-1zM879 358h2v1h-2zM881 377h1v9h-1zM879 378h2v1h-2zM881 397h1v9h-1zM879 398h2v1h-2zM881 417h1v9h-1zM879 418h2v1h-2zM896 357h1v9h-1zM894 358h2v1h-2zM896 377h1v9h-1zM894 378h2v1h-2zM896 397h1v9h-1zM894 398h2v1h-2zM911 317h1v9h-1zM909 318h2v1h-2zM911 337h1v9h-1zM909 338h2v1h-2zM911 357h1v9h-1zM909 358h2v1h-2zM911 377h1v9h-1zM909 378h2v1h-2zM911 397h1v9h-1zM909 398h2v1h-2zM926 357h1v9h-1zM924 358h2v1h-2zM926 377h1v9h-1zM924 378h2v1h-2zM926 397h1v9h-1zM924 398h2v1h-2zM941 357h1v9h-1zM939 358h2v1h-2zM941 377h1v9h-1zM939 378h2v1h-2zM941 397h1v9h-1zM939 398h2v1h-2zM956 357h1v9h-1zM954 358h2v1h-2zM956 377h1v9h-1zM954 378h2v1h-2zM956 397h1v9h-1zM954 398h2v1h-2zM956 417h1v9h-1zM954 418h2v1h-2zM971 317h1v9h-1zM969 318h2v1h-2zM971 337h1v9h-1zM969 338h2v1h-2zM971 357h1v9h-1zM969 358h2v1h-2zM971 377h1v9h-1zM969 378h2v1h-2zM971 397h1v9h-1zM969 398h2v1h-2zM986 317h1v9h-1zM984 318h2v1h-2zM986 337h1v9h-1zM984 338h2v1h-2zM986 357h1v9h-1zM984 358h2v1h-2zM986 377h1v9h-1zM984 378h2v1h-2zM986 397h1v9h-1zM984 398h2v1h-2zM1001 317h1v9h-1zM999 318h2v1h-2zM1001 337h1v9h-1zM999 338h2v1h-2zM1001 357h1v9h-1zM999 358h2v1h-2zM1001 377h1v9h-1zM999 378h2v1h-2zM1001 397h1v9h-1zM999 398h2v1h-2zM1016 136h1v9h-1zM1014 137h2v1h-2zM1016 157h1v9h-1zM1014 158h2v1h-2zM1016 177h1v9h-1zM1014 178h2v1h-2zM1016 197h1v9h-1zM1014 198h2v1h-2zM1016 217h1v9h-1zM1014 218h2v1h-2zM1016 237h1v9h-1zM1014 238h2v1h-2zM1016 257h1v9h-1zM1014 258h2v1h-2zM1016 277h1v9h-1zM1014 278h2v1h-2zM1016 297h1v9h-1zM1014 298h2v1h-2zM1016 317h1v9h-1zM1014 318h2v1h-2zM1031 177h1v9h-1zM1029 178h2v1h-2zM1031 197h1v9h-1zM1029 198h2v1h-2zM1031 217h1v9h-1zM1029 218h2v1h-2zM1031 237h1v9h-1zM1029 238h2v1h-2zM1046 197h1v9h-1zM1044 198h2v1h-2zM1046 217h1v9h-1zM1044 218h2v1h-2zM1046 237h1v9h-1zM1044 238h2v1h-2zM1046 257h1v9h-1zM1044 258h2v1h-2zM1046 277h1v9h-1zM1044 278h2v1h-2zM1061 257h1v9h-1zM1059 258h2v1h-2zM1061 277h1v9h-1zM1059 278h2v1h-2zM1061 297h1v9h-1zM1059 298h2v1h-2zM1061 317h1v9h-1zM1059 318h2v1h-2zM1076 297h1v9h-1zM1074 298h2v1h-2zM1076 317h1v9h-1zM1074 318h2v1h-2zM1076 337h1v9h-1zM1074 338h2v1h-2zM1091 277h1v9h-1zM1089 278h2v1h-2zM1091 297h1v9h-1zM1089 298h2v1h-2zM1091 317h1v9h-1zM1089 318h2v1h-2zM1106 277h1v9h-1zM1104 278h2v1h-2zM1106 297h1v9h-1zM1104 298h2v1h-2zM1106 317h1v9h-1zM1104 318h2v1h-2zM1121 257h1v9h-1zM1119 258h2v1h-2zM1121 277h1v9h-1zM1119 278h2v1h-2zM1121 297h1v9h-1zM1119 298h2v1h-2zM1136 217h1v9h-1zM1134 218h2v1h-2zM1136 237h1v9h-1zM1134 238h2v1h-2zM1136 257h1v9h-1zM1134 258h2v1h-2zM1151 197h1v9h-1zM1149 198h2v1h-2zM1151 217h1v9h-1zM1149 218h2v1h-2zM1151 237h1v9h-1zM1149 238h2v1h-2zM1151 257h1v9h-1zM1149 258h2v1h-2zM1166 197h1v9h-1zM1164 198h2v1h-2zM1166 217h1v9h-1zM1164 218h2v1h-2zM1166 237h1v9h-1zM1164 238h2v1h-2zM1166 257h1v9h-1zM1164 258h2v1h-2zM1181 217h1v9h-1zM1179 218h2v1h-2zM1181 237h1v9h-1zM1179 238h2v1h-2zM1181 257h1v9h-1zM1179 258h2v1h-2zM1196 197h1v9h-1zM1194 198h2v1h-2zM1196 217h1v9h-1zM1194 218h2v1h-2zM1196 237h1v9h-1zM1194 238h2v1h-2zM1211 197h1v9h-1zM1209 198h2v1h-2zM1211 217h1v9h-1zM1209 218h2v1h-2z"/>
<path fill="#1a1050" d="M11 518h1v9h-1zM9 519h2v1h-2zM11 538h1v9h-1zM9 539h2v1h-2zM11 558h1v9h-1zM9 559h2v1h-2zM11 578h1v9h-1zM9 579h2v1h-2zM26 498h1v9h-1zM24 499h2v1h-2zM26 518h1v9h-1zM24 519h2v1h-2zM26 538h1v9h-1zM24 539h2v1h-2zM26 558h1v9h-1zM24 559h2v1h-2zM26 578h1v9h-1zM24 579h2v1h-2zM41 478h1v9h-1zM39 479h2v1h-2zM41 498h1v9h-1zM39 499h2v1h-2zM41 518h1v9h-1zM39 519h2v1h-2zM56 498h1v9h-1zM54 499h2v1h-2zM56 518h1v9h-1zM54 519h2v1h-2zM56 538h1v9h-1zM54 539h2v1h-2zM56 558h1v9h-1zM54 559h2v1h-2zM71 538h1v9h-1zM69 539h2v1h-2zM71 558h1v9h-1zM69 559h2v1h-2zM71 578h1v9h-1zM69 579h2v1h-2zM71 598h1v9h-1zM69 599h2v1h-2zM86 598h1v9h-1zM84 599h2v1h-2zM86 618h1v9h-1zM84 619h2v1h-2zM86 638h1v9h-1zM84 639h2v1h-2zM101 558h1v9h-1zM99 559h2v1h-2zM101 578h1v9h-1zM99 579h2v1h-2zM101 598h1v9h-1zM99 599h2v1h-2zM101 618h1v9h-1zM99 619h2v1h-2zM116 518h1v9h-1zM114 519h2v1h-2zM116 538h1v9h-1zM114 539h2v1h-2zM116 558h1v9h-1zM114 559h2v1h-2zM116 578h1v9h-1zM114 579h2v1h-2zM131 578h1v9h-1zM129 579h2v1h-2zM131 598h1v9h-1zM129 599h2v1h-2zM131 618h1v9h-1zM129 619h2v1h-2zM131 638h1v9h-1zM129 639h2v1h-2zM146 618h1v9h-1zM144 619h2v1h-2zM146 638h1v9h-1zM144 639h2v1h-2zM146 658h1v9h-1zM144 659h2v1h-2zM161 638h1v9h-1zM159 639h2v1h-2zM161 658h1v9h-1zM159 659h2v1h-2zM176 638h1v9h-1zM174 639h2v1h-2zM176 658h1v9h-1zM174 659h2v1h-2zM191 578h1v9h-1zM189 579h2v1h-2zM191 598h1v9h-1zM189 599h2v1h-2zM191 618h1v9h-1zM189 619h2v1h-2zM191 638h1v9h-1zM189 639h2v1h-2zM206 478h1v9h-1zM204 479h2v1h-2zM206 498h1v9h-1zM204 499h2v1h-2zM206 518h1v9h-1zM204 519h2v1h-2zM206 538h1v9h-1zM204 539h2v1h-2zM221 618h1v9h-1zM219 619h2v1h-2zM221 638h1v9h-1zM219 639h2v1h-2zM221 658h1v9h-1zM219 659h2v1h-2zM236 638h1v9h-1zM234 639h2v1h-2zM236 658h1v9h-1zM234 659h2v1h-2zM251 618h1v9h-1zM249 619h2v1h-2zM251 638h1v9h-1zM249 639h2v1h-2zM251 658h1v9h-1zM249 659h2v1h-2zM296 638h1v9h-1zM294 639h2v1h-2zM296 658h1v9h-1zM294 659h2v1h-2zM311 618h1v9h-1zM309 619h2v1h-2zM311 638h1v9h-1zM309 639h2v1h-2zM311 658h1v9h-1zM309 659h2v1h-2zM326 598h1v9h-1zM324 599h2v1h-2zM326 618h1v9h-1zM324 619h2v1h-2zM326 638h1v9h-1zM324 639h2v1h-2zM326 658h1v9h-1zM324 659h2v1h-2zM341 538h1v9h-1zM339 539h2v1h-2zM341 558h1v9h-1zM339 559h2v1h-2zM341 578h1v9h-1zM339 579h2v1h-2zM341 598h1v9h-1zM339 599h2v1h-2zM356 498h1v9h-1zM354 499h2v1h-2zM356 518h1v9h-1zM354 519h2v1h-2zM356 538h1v9h-1zM354 539h2v1h-2zM356 558h1v9h-1zM354 559h2v1h-2zM371 478h1v9h-1zM369 479h2v1h-2zM371 498h1v9h-1zM369 499h2v1h-2zM371 518h1v9h-1zM369 519h2v1h-2zM371 538h1v9h-1zM369 539h2v1h-2zM386 478h1v9h-1zM384 479h2v1h-2zM386 498h1v9h-1zM384 499h2v1h-2zM386 518h1v9h-1zM384 519h2v1h-2zM401 478h1v9h-1zM399 479h2v1h-2zM401 498h1v9h-1zM399 499h2v1h-2zM401 518h1v9h-1zM399 519h2v1h-2zM416 478h1v9h-1zM414 479h2v1h-2zM416 498h1v9h-1zM414 499h2v1h-2zM416 518h1v9h-1zM414 519h2v1h-2zM416 538h1v9h-1zM414 539h2v1h-2zM431 518h1v9h-1zM429 519h2v1h-2zM431 538h1v9h-1zM429 539h2v1h-2zM431 558h1v9h-1zM429 559h2v1h-2zM431 578h1v9h-1zM429 579h2v1h-2zM446 518h1v9h-1zM444 519h2v1h-2zM446 538h1v9h-1zM444 539h2v1h-2zM446 558h1v9h-1zM444 559h2v1h-2zM446 578h1v9h-1zM444 579h2v1h-2zM461 498h1v9h-1zM459 499h2v1h-2zM461 518h1v9h-1zM459 519h2v1h-2zM461 538h1v9h-1zM459 539h2v1h-2zM476 498h1v9h-1zM474 499h2v1h-2zM476 518h1v9h-1zM474 519h2v1h-2zM476 538h1v9h-1zM474 539h2v1h-2zM476 558h1v9h-1zM474 559h2v1h-2zM491 518h1v9h-1zM489 519h2v1h-2zM491 538h1v9h-1zM489 539h2v1h-2zM491 558h1v9h-1zM489 559h2v1h-2zM506 458h1v9h-1zM504 459h2v1h-2zM506 478h1v9h-1zM504 479h2v1h-2zM506 498h1v9h-1zM504 499h2v1h-2zM521 478h1v9h-1zM519 479h2v1h-2zM521 498h1v9h-1zM519 499h2v1h-2zM521 518h1v9h-1zM519 519h2v1h-2zM521 538h1v9h-1zM519 539h2v1h-2zM536 498h1v9h-1zM534 499h2v1h-2zM536 518h1v9h-1zM534 519h2v1h-2zM536 538h1v9h-1zM534 539h2v1h-2zM536 558h1v9h-1zM534 559h2v1h-2zM551 498h1v9h-1zM549 499h2v1h-2zM551 518h1v9h-1zM549 519h2v1h-2zM551 538h1v9h-1zM549 539h2v1h-2zM551 558h1v9h-1zM549 559h2v1h-2zM566 478h1v9h-1zM564 479h2v1h-2zM566 498h1v9h-1zM564 499h2v1h-2zM566 518h1v9h-1zM564 519h2v1h-2zM566 538h1v9h-1zM564 539h2v1h-2zM581 498h1v9h-1zM579 499h2v1h-2zM581 518h1v9h-1zM579 519h2v1h-2zM581 538h1v9h-1zM579 539h2v1h-2zM596 478h1v9h-1zM594 479h2v1h-2zM596 498h1v9h-1zM594 499h2v1h-2zM596 518h1v9h-1zM594 519h2v1h-2zM611 478h1v9h-1zM609 479h2v1h-2zM611 498h1v9h-1zM609 499h2v1h-2zM611 518h1v9h-1zM609 519h2v1h-2zM626 478h1v9h-1zM624 479h2v1h-2zM626 498h1v9h-1zM624 499h2v1h-2zM626 518h1v9h-1zM624 519h2v1h-2zM626 538h1v9h-1zM624 539h2v1h-2zM626 558h1v9h-1zM624 559h2v1h-2zM641 498h1v9h-1zM639 499h2v1h-2zM641 518h1v9h-1zM639 519h2v1h-2zM641 538h1v9h-1zM639 539h2v1h-2zM656 458h1v9h-1zM654 459h2v1h-2zM656 478h1v9h-1zM654 479h2v1h-2zM656 498h1v9h-1zM654 499h2v1h-2zM656 518h1v9h-1zM654 519h2v1h-2zM671 417h1v9h-1zM669 418h2v1h-2zM671 437h1v9h-1zM669 438h2v1h-2zM671 458h1v9h-1zM669 459h2v1h-2zM671 478h1v9h-1zM669 479h2v1h-2zM671 498h1v9h-1zM669 499h2v1h-2zM686 437h1v9h-1zM684 438h2v1h-2zM686 458h1v9h-1zM684 459h2v1h-2zM686 478h1v9h-1zM684 479h2v1h-2zM686 498h1v9h-1zM684 499h2v1h-2zM686 518h1v9h-1zM684 519h2v1h-2zM701 498h1v9h-1zM699 499h2v1h-2zM701 518h1v9h-1zM699 519h2v1h-2zM701 538h1v9h-1zM699 539h2v1h-2zM701 558h1v9h-1zM699 559h2v1h-2zM716 498h1v9h-1zM714 499h2v1h-2zM716 518h1v9h-1zM714 519h2v1h-2zM716 538h1v9h-1zM714 539h2v1h-2zM716 558h1v9h-1zM714 559h2v1h-2zM731 518h1v9h-1zM729 519h2v1h-2zM731 538h1v9h-1zM729 539h2v1h-2zM731 558h1v9h-1zM729 559h2v1h-2zM731 578h1v9h-1zM729 579h2v1h-2zM746 518h1v9h-1zM744 519h2v1h-2zM746 538h1v9h-1zM744 539h2v1h-2zM746 558h1v9h-1zM744 559h2v1h-2zM761 498h1v9h-1zM759 499h2v1h-2zM761 518h1v9h-1zM759 519h2v1h-2zM761 538h1v9h-1zM759 539h2v1h-2zM776 498h1v9h-1zM774 499h2v1h-2zM776 518h1v9h-1zM774 519h2v1h-2zM776 538h1v9h-1zM774 539h2v1h-2zM791 458h1v9h-1zM789 459h2v1h-2zM791 478h1v9h-1zM789 479h2v1h-2zM791 498h1v9h-1zM789 499h2v1h-2zM791 518h1v9h-1zM789 519h2v1h-2zM806 437h1v9h-1zM804 438h2v1h-2zM806 458h1v9h-1zM804 459h2v1h-2zM806 478h1v9h-1zM804 479h2v1h-2zM806 498h1v9h-1zM804 499h2v1h-2zM821 437h1v9h-1zM819 438h2v1h-2zM821 458h1v9h-1zM819 459h2v1h-2zM836 417h1v9h-1zM834 418h2v1h-2zM836 437h1v9h-1zM834 438h2v1h-2zM836 458h1v9h-1zM834 459h2v1h-2zM851 458h1v9h-1zM849 459h2v1h-2zM851 478h1v9h-1zM849 479h2v1h-2zM866 458h1v9h-1zM864 459h2v1h-2zM866 478h1v9h-1zM864 479h2v1h-2zM866 498h1v9h-1zM864 499h2v1h-2zM881 437h1v9h-1zM879 438h2v1h-2zM881 458h1v9h-1zM879 459h2v1h-2zM881 478h1v9h-1zM879 479h2v1h-2zM881 498h1v9h-1zM879 499h2v1h-2zM896 437h1v9h-1zM894 438h2v1h-2zM896 458h1v9h-1zM894 459h2v1h-2zM911 417h1v9h-1zM909 418h2v1h-2zM911 437h1v9h-1zM909 438h2v1h-2zM911 458h1v9h-1zM909 459h2v1h-2zM911 478h1v9h-1zM909 479h2v1h-2zM926 437h1v9h-1zM924 438h2v1h-2zM926 458h1v9h-1zM924 459h2v1h-2zM926 478h1v9h-1zM924 479h2v1h-2zM941 437h1v9h-1zM939 438h2v1h-2zM941 458h1v9h-1zM939 459h2v1h-2zM941 478h1v9h-1zM939 479h2v1h-2zM956 437h1v9h-1zM954 438h2v1h-2zM956 458h1v9h-1zM954 459h2v1h-2zM956 478h1v9h-1zM954 479h2v1h-2zM956 498h1v9h-1zM954 499h2v1h-2zM971 417h1v9h-1zM969 418h2v1h-2zM971 437h1v9h-1zM969 438h2v1h-2zM971 458h1v9h-1zM969 459h2v1h-2zM971 478h1v9h-1zM969 479h2v1h-2zM986 417h1v9h-1zM984 418h2v1h-2zM986 437h1v9h-1zM984 438h2v1h-2zM986 458h1v9h-1zM984 459h2v1h-2zM986 478h1v9h-1zM984 479h2v1h-2zM1001 417h1v9h-1zM999 418h2v1h-2zM1001 437h1v9h-1zM999 438h2v1h-2zM1001 458h1v9h-1zM999 459h2v1h-2zM1001 478h1v9h-1zM999 479h2v1h-2zM1001 498h1v9h-1zM999 499h2v1h-2zM1016 337h1v9h-1zM1014 338h2v1h-2zM1016 357h1v9h-1zM1014 358h2v1h-2zM1016 377h1v9h-1zM1014 378h2v1h-2zM1016 397h1v9h-1zM1014 398h2v1h-2zM1031 257h1v9h-1zM1029 258h2v1h-2zM1031 277h1v9h-1zM1029 278h2v1h-2zM1031 297h1v9h-1zM1029 298h2v1h-2zM1031 317h1v9h-1zM1029 318h2v1h-2zM1031 337h1v9h-1zM1029 338h2v1h-2zM1046 297h1v9h-1zM1044 298h2v1h-2zM1046 317h1v9h-1zM1044 318h2v1h-2zM1046 337h1v9h-1zM1044 338h2v1h-2zM1046 357h1v9h-1zM1044 358h2v1h-2zM1046 377h1v9h-1zM1044 378h2v1h-2zM1061 337h1v9h-1zM1059 338h2v1h-2zM1061 357h1v9h-1zM1059 358h2v1h-2zM1061 377h1v9h-1zM1059 378h2v1h-2zM1061 397h1v9h-1zM1059 398h2v1h-2zM1076 377h1v9h-1zM1074 378h2v1h-2zM1076 397h1v9h-1zM1074 398h2v1h-2zM1076 417h1v9h-1zM1074 418h2v1h-2zM1091 357h1v9h-1zM1089 358h2v1h-2zM1091 377h1v9h-1zM1089 378h2v1h-2zM1091 397h1v9h-1zM1089 398h2v1h-2zM1106 357h1v9h-1zM1104 358h2v1h-2zM1106 377h1v9h-1zM1104 378h2v1h-2zM1106 397h1v9h-1zM1104 398h2v1h-2zM1121 337h1v9h-1zM1119 338h2v1h-2zM1121 357h1v9h-1zM1119 358h2v1h-2zM1121 377h1v9h-1zM1119 378h2v1h-2zM1136 297h1v9h-1zM1134 298h2v1h-2zM1136 317h1v9h-1zM1134 318h2v1h-2zM1136 337h1v9h-1zM1134 338h2v1h-2zM1136 357h1v9h-1zM1134 358h2v1h-2zM1151 277h1v9h-1zM1149 278h2v1h-2zM1151 297h1v9h-1zM1149 298h2v1h-2zM1151 317h1v9h-1zM1149 318h2v1h-2zM1151 337h1v9h-1zM1149 338h2v1h-2zM1151 357h1v9h-1zM1149 358h2v1h-2zM1166 277h1v9h-1zM1164 278h2v1h-2zM1166 297h1v9h-1zM1164 298h2v1h-2zM1166 317h1v9h-1zM1164 318h2v1h-2zM1166 337h1v9h-1zM1164 338h2v1h-2zM1181 297h1v9h-1zM1179 298h2v1h-2zM1181 317h1v9h-1zM1179 318h2v1h-2zM1181 337h1v9h-1zM1179 338h2v1h-2zM1196 277h1v9h-1zM1194 278h2v1h-2zM1196 297h1v9h-1zM1194 298h2v1h-2zM1196 317h1v9h-1zM1194 318h2v1h-2zM1211 297h1v9h-1zM1209 298h2v1h-2zM1211 317h1v9h-1zM1209 318h2v1h-2z"/>
<path d="M13.5 481V505M13.5 539V542" stroke="#00ff00" stroke-width="1" fill="none"/><rect x="9.5" y="505.5" width="8" height="33" fill="none" stroke="#00ff00" stroke-width="1"/><path d="M28.5 508V530" stroke="#00ff00" stroke-width="1" fill="none"/><rect x="24.5" y="400.5" width="8" height="107" fill="none" stroke="#00ff00" stroke-width="1"/><path d="M43.5 474V484" stroke="#ff0000" stroke-width="1" fill="none"/><rect x="39.5" y="400.5" width="8" height="73" fill="none" stroke="#ff0000" stroke-width="1"/><path d="M58.5 492V506" stroke="#ff0000" stroke-width="1" fill="none"/><rect x="54.5" y="400.5" width="8" height="91" fill="none" stroke="#ff0000" stroke-width="1"/><path d="M73.5 472V489M73.5 565V566" stroke="#ff0000" stroke-width="1" fill="none"/><rect x="69.5" y="489.5" width="8" height="75" fill="none" stroke="#ff0000" stroke-width="1"/><path d="M88.5 579V592" stroke="#ff0000" stroke-width="1" fill="none"/><rect x="84.5" y="565.5" width="8" height="13" fill="none" stroke="#ff0000" stroke-width="1"/><path d="M103.5 472V523" stroke="#00ff00" stroke-width="1" fill="none"/><rect x="99.5" y="523.5" width="8" height="53" fill="none" stroke="#00ff00" stroke-width="1"/><path d="M118.5 479V503M118.5 529V531" stroke="#00ff00" stroke-width="1" fill="none"/><rect x="114.5" y="503.5" width="8" height="25" fill="none" stroke="#00ff00" stroke-width="1"/><path d="M133.5 472V505M133.5 561V598" stroke="#ff0000" stroke-width="1" fill="none"/><rect x="129.5" y="505.5" width="8" height="55" fill="none" stroke="#ff0000" stroke-width="1"/><path d="M148.5 555V557" stroke="#ff0000" stroke-width="1" fill="none"/><rect x="144.5" y="557.5" width="8" height="95" fill="none" stroke="#ff0000" stroke-width="1"/><path d="M163.5 603V627M163.5 651V653" stroke="#00ff00" stroke-width="1" fill="none"/><rect x="159.5" y="627.5" width="8" height="23" fill="none" stroke="#00ff00" stroke-width="1"/><path d="M178.5 597V601M178.5 631V653" stroke="#00ff00" stroke-width="1" fill="none"/><rect x="174.5" y="601.5" width="8" height="29" fill="none" stroke="#00ff00" stroke-width="1"/><path d="M193.5 473V477" stroke="#00ff00" stroke-width="1" fill="none"/><rect x="189.5" y="477.5" width="8" height="126" fill="none" stroke="#00ff00" stroke-width="1"/><path d="M208.5 474V498" stroke="#00ff00" stroke-width="1" fill="none"/><rect x="204.5" y="400.5" width="8" height="73" fill="none" stroke="#00ff00" stroke-width="1"/><path d="M223.5 623V650" stroke="#ff0000" stroke-width="1" fill="none"/><rect x="219.5" y="400.5" width="8" height="222" fill="none" stroke="#ff0000" stroke-width="1"/><path d="M238.5 601V623M238.5 624V663" stroke="#ff0000" stroke-width="1" fill="none"/><rect x="234" y="623" width="9" height="1" fill="#ff0000"/><path d="M253.5 591V593M253.5 623V642" stroke="#00ff00" stroke-width="1" fill="none"/><rect x="249.5" y="593.5" width="8" height="29" fill="none" stroke="#00ff00" stroke-width="1"/><path d="M268.5 585V591" stroke="#ff0000" stroke-width="1" fill="none"/><rect x="264.5" y="591.5" width="8" height="89" fill="none" stroke="#ff0000" stroke-width="1"/><path d="M283.5 629V653" stroke="#00ff00" stroke-width="1" fill="none"/><rect x="279.5" y="653.5" width="8" height="27" fill="none" stroke="#00ff00" stroke-width="1"/><path d="M298.5 593V621M298.5 653V656" stroke="#00ff00" stroke-width="1" fill="none"/><rect x="294.5" y="621.5" width="8" height="31" fill="none" stroke="#00ff00" stroke-width="1"/><path d="M313.5 587V595M313.5 625V632" stroke="#00ff00" stroke-width="1" fill="none"/><rect x="309.5" y="595.5" width="8" height="29" fill="none" stroke="#00ff00" stroke-width="1"/><path d="M328.5 549V557M328.5 598V634" stroke="#00ff00" stroke-width="1" fill="none"/><rect x="324.5" y="557.5" width="8" height="40" fill="none" stroke="#00ff00" stroke-width="1"/><path d="M343.5 485V517M343.5 557V558" stroke="#00ff00" stroke-width="1" fill="none"/><rect x="339.5" y="517.5" width="8" height="39" fill="none" stroke="#00ff00" stroke-width="1"/><path d="M358.5 520V528" stroke="#00ff00" stroke-width="1" fill="none"/><rect x="354.5" y="400.5" width="8" height="119" fill="none" stroke="#00ff00" stroke-width="1"/><rect x="369.5" y="400.5" width="8" height="95" fill="none" stroke="#ff0000" stroke-width="1"/><rect x="384.5" y="400.5" width="8" height="91" fill="none" stroke="#00ff00" stroke-width="1"/><path d="M403.5 401V485" stroke="#00ff00" stroke-width="1" fill="none"/><rect x="399" y="400" width="9" height="1" fill="#00ff00"/><path d="M418.5 491V504" stroke="#ff0000" stroke-width="1" fill="none"/><rect x="414.5" y="400.5" width="8" height="90" fill="none" stroke="#ff0000" stroke-width="1"/><path d="M433.5 488V492M433.5 540V541" stroke="#ff0000" stroke-width="1" fill="none"/><rect x="429.5" y="492.5" width="8" height="47" fill="none" stroke="#ff0000" stroke-width="1"/><path d="M448.5 459V474" stroke="#00ff00" stroke-width="1" fill="none"/><rect x="444.5" y="474.5" width="8" height="67" fill="none" stroke="#00ff00" stroke-width="1"/><path d="M463.5 463V472M463.5 504V507" stroke="#ff0000" stroke-width="1" fill="none"/><rect x="459.5" y="472.5" width="8" height="31" fill="none" stroke="#ff0000" stroke-width="1"/><path d="M478.5 465V507M478.5 512V525" stroke="#ff0000" stroke-width="1" fill="none"/><rect x="474.5" y="507.5" width="8" height="4" fill="none" stroke="#ff0000" stroke-width="1"/><path d="M493.5 514V534" stroke="#00ff00" stroke-width="1" fill="none"/><rect x="489.5" y="420.5" width="8" height="93" fill="none" stroke="#00ff00" stroke-width="1"/><path d="M508.5 414V416M508.5 451V460" stroke="#ff0000" stroke-width="1" fill="none"/><rect x="504.5" y="416.5" width="8" height="34" fill="none" stroke="#ff0000" stroke-width="1"/><path d="M523.5 426V448M523.5 458V460" stroke="#ff0000" stroke-width="1" fill="none"/><rect x="519.5" y="448.5" width="8" height="9" fill="none" stroke="#ff0000" stroke-width="1"/><path d="M538.5 459V461M538.5 494V512" stroke="#ff0000" stroke-width="1" fill="none"/><rect x="534.5" y="461.5" width="8" height="32" fill="none" stroke="#ff0000" stroke-width="1"/><path d="M553.5 467V469M553.5 496V530" stroke="#00ff00" stroke-width="1" fill="none"/><rect x="549.5" y="469.5" width="8" height="26" fill="none" stroke="#00ff00" stroke-width="1"/><path d="M568.5 448V474M568.5 492V498" stroke="#ff0000" stroke-width="1" fill="none"/><rect x="564.5" y="474.5" width="8" height="17" fill="none" stroke="#ff0000" stroke-width="1"/><path d="M583.5 465V491M583.5 494V504" stroke="#00ff00" stroke-width="1" fill="none"/><rect x="579.5" y="491.5" width="8" height="2" fill="none" stroke="#00ff00" stroke-width="1"/><rect x="594.5" y="471.5" width="8" height="22" fill="none" stroke="#00ff00" stroke-width="1"/><rect x="609.5" y="440.5" width="8" height="33" fill="none" stroke="#00ff00" stroke-width="1"/><path d="M628.5 440V442M628.5 476V514" stroke="#ff0000" stroke-width="1" fill="none"/><rect x="624.5" y="442.5" width="8" height="33" fill="none" stroke="#ff0000" stroke-width="1"/><path d="M643.5 459V474" stroke="#ff0000" stroke-width="1" fill="none"/><rect x="639.5" y="474.5" width="8" height="19" fill="none" stroke="#ff0000" stroke-width="1"/><path d="M658.5 402V404" stroke="#00ff00" stroke-width="1" fill="none"/><rect x="654.5" y="404.5" width="8" height="87" fill="none" stroke="#00ff00" stroke-width="1"/><path d="M673.5 390V410M673.5 413V449" stroke="#ff0000" stroke-width="1" fill="none"/><rect x="669.5" y="410.5" width="8" height="2" fill="none" stroke="#ff0000" stroke-width="1"/><path d="M688.5 394V410M688.5 477V478" stroke="#ff0000" stroke-width="1" fill="none"/><rect x="684.5" y="410.5" width="8" height="66" fill="none" stroke="#ff0000" stroke-width="1"/><path d="M703.5 470V475M703.5 478V530" stroke="#00ff00" stroke-width="1" fill="none"/><rect x="699.5" y="475.5" width="8" height="2" fill="none" stroke="#00ff00" stroke-width="1"/><path d="M718.5 469V474M718.5 480V530" stroke="#00ff00" stroke-width="1" fill="none"/><rect x="714.5" y="474.5" width="8" height="5" fill="none" stroke="#00ff00" stroke-width="1"/><path d="M733.5 473V475M733.5 528V537" stroke="#ff0000" stroke-width="1" fill="none"/><rect x="729.5" y="475.5" width="8" height="52" fill="none" stroke="#ff0000" stroke-width="1"/><path d="M748.5 526V533" stroke="#00ff00" stroke-width="1" fill="none"/><rect x="744.5" y="501.5" width="8" height="24" fill="none" stroke="#00ff00" stroke-width="1"/><path d="M763.5 465V475M763.5 498V509" stroke="#00ff00" stroke-width="1" fill="none"/><rect x="759.5" y="475.5" width="8" height="22" fill="none" stroke="#00ff00" stroke-width="1"/><path d="M778.5 465V473M778.5 484V495" stroke="#ff0000" stroke-width="1" fill="none"/><rect x="774.5" y="473.5" width="8" height="10" fill="none" stroke="#ff0000" stroke-width="1"/><path d="M793.5 406V413M793.5 486V489" stroke="#00ff00" stroke-width="1" fill="none"/><rect x="789.5" y="413.5" width="8" height="72" fill="none" stroke="#00ff00" stroke-width="1"/><path d="M808.5 384V414M808.5 424V467" stroke="#ff0000" stroke-width="1" fill="none"/><rect x="804.5" y="414.5" width="8" height="9" fill="none" stroke="#ff0000" stroke-width="1"/><path d="M823.5 398V409M823.5 425V426" stroke="#00ff00" stroke-width="1" fill="none"/><rect x="819.5" y="409.5" width="8" height="15" fill="none" stroke="#00ff00" stroke-width="1"/><path d="M838.5 388V412M838.5 421V425" stroke="#ff0000" stroke-width="1" fill="none"/><rect x="834.5" y="412.5" width="8" height="8" fill="none" stroke="#ff0000" stroke-width="1"/><path d="M853.5 441V451" stroke="#ff0000" stroke-width="1" fill="none"/><rect x="849.5" y="418.5" width="8" height="22" fill="none" stroke="#ff0000" stroke-width="1"/><path d="M868.5 420V438M868.5 447V454" stroke="#00ff00" stroke-width="1" fill="none"/><rect x="864.5" y="438.5" width="8" height="8" fill="none" stroke="#00ff00" stroke-width="1"/><path d="M883.5 370V418M883.5 437V459" stroke="#00ff00" stroke-width="1" fill="none"/><rect x="879.5" y="418.5" width="8" height="18" fill="none" stroke="#00ff00" stroke-width="1"/><path d="M898.5 406V414M898.5 415V431" stroke="#00ff00" stroke-width="1" fill="none"/><rect x="894" y="414" width="9" height="1" fill="#00ff00"/><path d="M913.5 374V400M913.5 417V448" stroke="#00ff00" stroke-width="1" fill="none"/><rect x="909.5" y="400.5" width="8" height="16" fill="none" stroke="#00ff00" stroke-width="1"/><path d="M928.5 432V434" stroke="#ff0000" stroke-width="1" fill="none"/><rect x="924.5" y="402.5" width="8" height="29" fill="none" stroke="#ff0000" stroke-width="1"/><path d="M943.5 404V412M943.5 433V441" stroke="#00ff00" stroke-width="1" fill="none"/><rect x="939.5" y="412.5" width="8" height="20" fill="none" stroke="#00ff00" stroke-width="1"/><path d="M958.5 398V410M958.5 437V458" stroke="#ff0000" stroke-width="1" fill="none"/><rect x="954.5" y="410.5" width="8" height="26" fill="none" stroke="#ff0000" stroke-width="1"/><path d="M973.5 362V369M973.5 436V437" stroke="#00ff00" stroke-width="1" fill="none"/><rect x="969.5" y="369.5" width="8" height="66" fill="none" stroke="#00ff00" stroke-width="1"/><path d="M988.5 364V370M988.5 435V451" stroke="#ff0000" stroke-width="1" fill="none"/><rect x="984.5" y="370.5" width="8" height="64" fill="none" stroke="#ff0000" stroke-width="1"/><path d="M1003.5 360V361M1003.5 438V453" stroke="#00ff00" stroke-width="1" fill="none"/><rect x="999.5" y="361.5" width="8" height="76" fill="none" stroke="#00ff00" stroke-width="1"/><path d="M1018.5 194V243" stroke="#00ff00" stroke-width="1" fill="none"/><rect x="1014.5" y="243.5" width="8" height="121" fill="none" stroke="#00ff00" stroke-width="1"/><path d="M1033.5 220V244M1033.5 274V291" stroke="#ff0000" stroke-width="1" fill="none"/><rect x="1029.5" y="244.5" width="8" height="29" fill="none" stroke="#ff0000" stroke-width="1"/><path d="M1048.5 238V266M1048.5 332V333" stroke="#ff0000" stroke-width="1" fill="none"/><rect x="1044.5" y="266.5" width="8" height="65" fill="none" stroke="#ff0000" stroke-width="1"/><path d="M1063.5 298V328M1063.5 360V367" stroke="#ff0000" stroke-width="1" fill="none"/><rect x="1059.5" y="328.5" width="8" height="31" fill="none" stroke="#ff0000" stroke-width="1"/><path d="M1078.5 357V376" stroke="#00ff00" stroke-width="1" fill="none"/><rect x="1074.5" y="349.5" width="8" height="7" fill="none" stroke="#00ff00" stroke-width="1"/><path d="M1093.5 318V331M1093.5 348V359" stroke="#00ff00" stroke-width="1" fill="none"/><rect x="1089.5" y="331.5" width="8" height="16" fill="none" stroke="#00ff00" stroke-width="1"/><path d="M1108.5 318V324M1108.5 334V369" stroke="#00ff00" stroke-width="1" fill="none"/><rect x="1104.5" y="324.5" width="8" height="9" fill="none" stroke="#00ff00" stroke-width="1"/><path d="M1123.5 300V304M1123.5 324V341" stroke="#00ff00" stroke-width="1" fill="none"/><rect x="1119.5" y="304.5" width="8" height="19" fill="none" stroke="#00ff00" stroke-width="1"/><path d="M1138.5 262V273M1138.5 303V311" stroke="#00ff00" stroke-width="1" fill="none"/><rect x="1134.5" y="273.5" width="8" height="29" fill="none" stroke="#00ff00" stroke-width="1"/><path d="M1153.5 248V254M1153.5 271V313" stroke="#00ff00" stroke-width="1" fill="none"/><rect x="1149.5" y="254.5" width="8" height="16" fill="none" stroke="#00ff00" stroke-width="1"/><path d="M1168.5 240V258M1168.5 290V298" stroke="#ff0000" stroke-width="1" fill="none"/><rect x="1164.5" y="258.5" width="8" height="31" fill="none" stroke="#ff0000" stroke-width="1"/><path d="M1183.5 262V274M1183.5 287V297" stroke="#00ff00" stroke-width="1" fill="none"/><rect x="1179.5" y="274.5" width="8" height="12" fill="none" stroke="#00ff00" stroke-width="1"/><path d="M1198.5 240V264M1198.5 273V287" stroke="#00ff00" stroke-width="1" fill="none"/><rect x="1194.5" y="264.5" width="8" height="8" fill="none" stroke="#00ff00" stroke-width="1"/><path d="M1213.5 252V254M1213.5 267V273" stroke="#00ff00" stroke-width="1" fill="none"/><rect x="1209.5" y="254.5" width="8" height="12" fill="none" stroke="#00ff00" stroke-width="1"/>
</g>
<rect x="427" y="242" width="798" height="1" fill="#fff" style="mix-blend-mode:difference"/>
<rect x="598" y="104" width="1" height="556" fill="#fff" style="mix-blend-mode:difference"/>
<rect x="1225" y="104" width="1" height="557" fill="#fff"/>
<rect x="3" y="660" width="1223" height="1" fill="#fff"/>
</svg>
<div style="position:absolute;left:427px;top:106px;width:7px;height:15px;background:#00b400;"></div>
<div id="h8" style="position:absolute;top:105.5px;height:16px;line-height:16px;font-size:12px;color:#000;white-space:pre;left:427.50px;transform-origin:0 50%;transform:scaleX(0.8972);">8</div>
<div style="position:absolute;left:436px;top:104px;width:789px;height:18px;overflow:hidden"><div id="hdr" style="position:absolute;top:0.5px;height:17px;line-height:17px;font-size:13px;color:#fff;white-space:pre;left:0.00px;transform-origin:0 50%;transform:scaleX(0.8571);">2019-04-08 13:56:54 H: 0.86242 L: 0.86238 O: 0.86239 V: 82 1 Min  B: 0.86232 A: 0.86252 1x1 TR: 6s BV: 38 AV: 44 DV: 104728 CountDown Timer</div><div id="hdr2" style="position:absolute;top:0.5px;height:17px;line-height:17px;font-size:13px;color:#fff;white-space:pre;left:741.00px;transform-origin:0 50%;transform:scaleX(0.9108);">(20, 90, N</div></div>
<div id="px0" style="position:absolute;top:133.5px;height:16px;line-height:16px;font-size:12px;color:#fff;white-space:pre;left:1259.00px;transform-origin:0 50%;transform:scaleX(0.8988);">0.86270</div>
<div id="px1" style="position:absolute;top:174.5px;height:16px;line-height:16px;font-size:12px;color:#fff;white-space:pre;left:1259.00px;transform-origin:0 50%;transform:scaleX(0.8988);">0.86260</div>
<div id="px2" style="position:absolute;top:214.5px;height:16px;line-height:16px;font-size:12px;color:#fff;white-space:pre;left:1259.00px;transform-origin:0 50%;transform:scaleX(0.8988);">0.86250</div>
<div id="px3" style="position:absolute;top:254.5px;height:16px;line-height:16px;font-size:12px;color:#fff;white-space:pre;left:1259.00px;transform-origin:0 50%;transform:scaleX(0.8988);">0.86240</div>
<div id="px4" style="position:absolute;top:294.5px;height:16px;line-height:16px;font-size:12px;color:#fff;white-space:pre;left:1259.00px;transform-origin:0 50%;transform:scaleX(0.8988);">0.86230</div>
<div id="px5" style="position:absolute;top:334.5px;height:16px;line-height:16px;font-size:12px;color:#fff;white-space:pre;left:1259.00px;transform-origin:0 50%;transform:scaleX(0.8988);">0.86220</div>
<div id="px6" style="position:absolute;top:374.5px;height:16px;line-height:16px;font-size:12px;color:#fff;white-space:pre;left:1259.00px;transform-origin:0 50%;transform:scaleX(0.8988);">0.86210</div>
<div id="px7" style="position:absolute;top:414.5px;height:16px;line-height:16px;font-size:12px;color:#fff;white-space:pre;left:1259.00px;transform-origin:0 50%;transform:scaleX(0.8988);">0.86200</div>
<div id="px8" style="position:absolute;top:455.5px;height:16px;line-height:16px;font-size:12px;color:#fff;white-space:pre;left:1259.00px;transform-origin:0 50%;transform:scaleX(0.8988);">0.86190</div>
<div id="px9" style="position:absolute;top:495.5px;height:16px;line-height:16px;font-size:12px;color:#fff;white-space:pre;left:1259.00px;transform-origin:0 50%;transform:scaleX(0.8988);">0.86180</div>
<div id="px10" style="position:absolute;top:535.5px;height:16px;line-height:16px;font-size:12px;color:#fff;white-space:pre;left:1259.00px;transform-origin:0 50%;transform:scaleX(0.8988);">0.86170</div>
<div id="px11" style="position:absolute;top:575.5px;height:16px;line-height:16px;font-size:12px;color:#fff;white-space:pre;left:1259.00px;transform-origin:0 50%;transform:scaleX(0.8988);">0.86160</div>
<div id="px12" style="position:absolute;top:615.5px;height:16px;line-height:16px;font-size:12px;color:#fff;white-space:pre;left:1259.00px;transform-origin:0 50%;transform:scaleX(0.8988);">0.86150</div>
<div id="r1" style="position:absolute;top:152.0px;height:16px;line-height:16px;font-size:12px;color:#fff;white-space:pre;left:1305.00px;transform-origin:0 50%;transform:scaleX(0.8988);">0.00020</div>
<div id="r2" style="position:absolute;top:170.0px;height:16px;line-height:16px;font-size:12px;color:#fff;white-space:pre;left:1305.00px;transform-origin:0 50%;transform:scaleX(0.9155);">50%</div>
<div style="position:absolute;left:1307px;top:191px;width:1.2px;height:9px;background:#fff;"></div><div style="position:absolute;left:1305px;top:192px;width:2px;height:1px;background:#fff;"></div>
<div style="position:absolute;left:1307px;top:209px;width:1.2px;height:9px;background:#00c000;"></div><div style="position:absolute;left:1305px;top:210px;width:2px;height:1px;background:#00c000;"></div>
<div style="position:absolute;left:1258px;top:235px;width:41px;height:12.5px;background:#fff;"></div>
<div style="position:absolute;left:1258px;top:247.5px;width:41px;height:13px;background:#fff;"></div>
<div id="pb1" style="position:absolute;top:233.5px;height:16px;line-height:16px;font-size:12px;color:#000;white-space:pre;left:1259.00px;transform-origin:0 50%;transform:scaleX(0.8988);">0.86245</div>
<div id="pb2" style="position:absolute;top:246.0px;height:16px;line-height:16px;font-size:12px;color:#000;white-space:pre;left:1259.00px;transform-origin:0 50%;transform:scaleX(0.8988);">0.86242</div>
<div style="position:absolute;left:1249.5px;top:289px;width:1.2px;height:9px;background:#c00000;"></div><div style="position:absolute;left:1247.5px;top:290px;width:2px;height:1px;background:#c00000;"></div>
<div style="position:absolute;left:1249.5px;top:307.5px;width:1.2px;height:9px;background:#fff;"></div><div style="position:absolute;left:1247.5px;top:308.5px;width:2px;height:1px;background:#fff;"></div>
<div id="l3" style="position:absolute;top:322.0px;height:16px;line-height:16px;font-size:12px;color:#fff;white-space:pre;left:1231.00px;transform-origin:0 50%;transform:scaleX(0.8739);">50%</div>
<div style="position:absolute;left:13px;top:660px;width:1px;height:4px;background:#fff;"></div>
<div style="position:absolute;left:58px;top:660px;width:1px;height:4px;background:#fff;"></div>
<div id="t0" style="position:absolute;top:663.5px;height:16px;line-height:16px;font-size:12px;color:#fff;white-space:pre;left:45.00px;transform-origin:0 50%;transform:scaleX(0.8991);">12:39</div>
<div style="position:absolute;left:103px;top:660px;width:1px;height:4px;background:#fff;"></div>
<div id="t1" style="position:absolute;top:663.5px;height:16px;line-height:16px;font-size:12px;color:#fff;white-space:pre;left:90.00px;transform-origin:0 50%;transform:scaleX(0.8991);">12:42</div>
<div style="position:absolute;left:148px;top:660px;width:1px;height:4px;background:#fff;"></div>
<div id="t2" style="position:absolute;top:663.5px;height:16px;line-height:16px;font-size:12px;color:#fff;white-space:pre;left:135.00px;transform-origin:0 50%;transform:scaleX(0.8991);">12:45</div>
<div style="position:absolute;left:193px;top:660px;width:1px;height:4px;background:#fff;"></div>
<div id="t3" style="position:absolute;top:663.5px;height:16px;line-height:16px;font-size:12px;color:#fff;white-space:pre;left:180.00px;transform-origin:0 50%;transform:scaleX(0.8991);">12:48</div>
<div style="position:absolute;left:238px;top:660px;width:1px;height:4px;background:#fff;"></div>
<div id="t4" style="position:absolute;top:663.5px;height:16px;line-height:16px;font-size:12px;color:#fff;white-space:pre;left:225.00px;transform-origin:0 50%;transform:scaleX(0.8991);">12:51</div>
<div style="position:absolute;left:283px;top:660px;width:1px;height:4px;background:#fff;"></div>
<div id="t5" style="position:absolute;top:663.5px;height:16px;line-height:16px;font-size:12px;color:#fff;white-space:pre;left:270.00px;transform-origin:0 50%;transform:scaleX(0.8991);">12:54</div>
<div style="position:absolute;left:328px;top:660px;width:1px;height:4px;background:#fff;"></div>
<div id="t6" style="position:absolute;top:663.5px;height:16px;line-height:16px;font-size:12px;color:#fff;white-space:pre;left:315.00px;transform-origin:0 50%;transform:scaleX(0.8991);">12:57</div>
<div style="position:absolute;left:373px;top:660px;width:1px;height:4px;background:#fff;"></div>
<div id="t7" style="position:absolute;top:663.5px;height:16px;line-height:16px;font-size:12px;color:#fff;white-space:pre;left:360.00px;transform-origin:0 50%;transform:scaleX(0.8991);">13:00</div>
<div style="position:absolute;left:418px;top:660px;width:1px;height:4px;background:#fff;"></div>
<div id="t8" style="position:absolute;top:663.5px;height:16px;line-height:16px;font-size:12px;color:#fff;white-space:pre;left:405.00px;transform-origin:0 50%;transform:scaleX(0.8991);">13:03</div>
<div style="position:absolute;left:463px;top:660px;width:1px;height:4px;background:#fff;"></div>
<div id="t9" style="position:absolute;top:663.5px;height:16px;line-height:16px;font-size:12px;color:#fff;white-space:pre;left:450.00px;transform-origin:0 50%;transform:scaleX(0.8991);">13:06</div>
<div style="position:absolute;left:508px;top:660px;width:1px;height:4px;background:#fff;"></div>
<div id="t10" style="position:absolute;top:663.5px;height:16px;line-height:16px;font-size:12px;color:#fff;white-space:pre;left:495.00px;transform-origin:0 50%;transform:scaleX(0.8991);">13:09</div>
<div style="position:absolute;left:553px;top:660px;width:1px;height:4px;background:#fff;"></div>
<div style="position:absolute;left:598px;top:660px;width:1px;height:4px;background:#fff;"></div>
<div style="position:absolute;left:643px;top:660px;width:1px;height:4px;background:#fff;"></div>
<div style="position:absolute;left:688px;top:660px;width:1px;height:4px;background:#fff;"></div>
<div id="t14" style="position:absolute;top:663.5px;height:16px;line-height:16px;font-size:12px;color:#fff;white-space:pre;left:675.00px;transform-origin:0 50%;transform:scaleX(0.8991);">13:21</div>
<div style="position:absolute;left:733px;top:660px;width:1px;height:4px;background:#fff;"></div>
<div id="t15" style="position:absolute;top:663.5px;height:16px;line-height:16px;font-size:12px;color:#fff;white-space:pre;left:720.00px;transform-origin:0 50%;transform:scaleX(0.8991);">13:24</div>
<div style="position:absolute;left:778px;top:660px;width:1px;height:4px;background:#fff;"></div>
<div id="t16" style="position:absolute;top:663.5px;height:16px;line-height:16px;font-size:12px;color:#fff;white-space:pre;left:765.00px;transform-origin:0 50%;transform:scaleX(0.8991);">13:27</div>
<div style="position:absolute;left:823px;top:660px;width:1px;height:4px;background:#fff;"></div>
<div id="t17" style="position:absolute;top:663.5px;height:16px;line-height:16px;font-size:12px;color:#fff;white-space:pre;left:810.00px;transform-origin:0 50%;transform:scaleX(0.8991);">13:30</div>
<div style="position:absolute;left:868px;top:660px;width:1px;height:4px;background:#fff;"></div>
<div id="t18" style="position:absolute;top:663.5px;height:16px;line-height:16px;font-size:12px;color:#fff;white-space:pre;left:855.00px;transform-origin:0 50%;transform:scaleX(0.8991);">13:33</div>
<div style="position:absolute;left:913px;top:660px;width:1px;height:4px;background:#fff;"></div>
<div id="t19" style="position:absolute;top:663.5px;height:16px;line-height:16px;font-size:12px;color:#fff;white-space:pre;left:900.00px;transform-origin:0 50%;transform:scaleX(0.8991);">13:36</div>
<div style="position:absolute;left:958px;top:660px;width:1px;height:4px;background:#fff;"></div>
<div id="t20" style="position:absolute;top:663.5px;height:16px;line-height:16px;font-size:12px;color:#fff;white-space:pre;left:945.00px;transform-origin:0 50%;transform:scaleX(0.8991);">13:39</div>
<div style="position:absolute;left:1003px;top:660px;width:1px;height:4px;background:#fff;"></div>
<div id="t21" style="position:absolute;top:663.5px;height:16px;line-height:16px;font-size:12px;color:#fff;white-space:pre;left:990.00px;transform-origin:0 50%;transform:scaleX(0.8991);">13:42</div>
<div style="position:absolute;left:1048px;top:660px;width:1px;height:4px;background:#fff;"></div>
<div id="t22" style="position:absolute;top:663.5px;height:16px;line-height:16px;font-size:12px;color:#fff;white-space:pre;left:1035.00px;transform-origin:0 50%;transform:scaleX(0.8991);">13:45</div>
<div style="position:absolute;left:1093px;top:660px;width:1px;height:4px;background:#fff;"></div>
<div id="t23" style="position:absolute;top:663.5px;height:16px;line-height:16px;font-size:12px;color:#fff;white-space:pre;left:1080.00px;transform-origin:0 50%;transform:scaleX(0.8991);">13:48</div>
<div style="position:absolute;left:1138px;top:660px;width:1px;height:4px;background:#fff;"></div>
<div id="t24" style="position:absolute;top:663.5px;height:16px;line-height:16px;font-size:12px;color:#fff;white-space:pre;left:1125.00px;transform-origin:0 50%;transform:scaleX(0.8991);">13:51</div>
<div style="position:absolute;left:1183px;top:660px;width:1px;height:4px;background:#fff;"></div>
<div id="t25" style="position:absolute;top:663.5px;height:16px;line-height:16px;font-size:12px;color:#fff;white-space:pre;left:1170.00px;transform-origin:0 50%;transform:scaleX(0.8991);">13:54</div>
<div style="position:absolute;left:3px;top:664px;width:34px;height:15px;background:#fff;"></div>
<div id="t_d" style="position:absolute;top:663.5px;height:16px;line-height:16px;font-size:12px;color:#000;white-space:pre;left:3.50px;transform-origin:0 50%;transform:scaleX(0.9514);">19-4-8</div>
<div style="position:absolute;left:526px;top:665px;width:144px;height:13px;background:#fff;"></div>
<div id="t_mid" style="position:absolute;top:663.5px;height:16px;line-height:16px;font-size:12px;color:#000;white-space:pre;left:531.00px;transform-origin:0 50%;transform:scaleX(0.9473);">Mon 2019-04-08  13:15:00</div>
<div style="position:absolute;left:1344px;top:664px;width:18px;height:15px;background:#00c000;"></div>
<div id="g14" style="position:absolute;top:663.5px;height:16px;line-height:16px;font-size:12px;color:#fff;white-space:pre;left:1346.00px;transform-origin:0 50%;transform:scaleX(1.0480);">14</div>
<div style="position:absolute;left:1.5px;top:680px;width:1361px;height:17px;background:#f0f0f0;"></div>
<div style="position:absolute;left:1.5px;top:680px;width:1361px;height:1px;background:#e6e6e6;"></div>
<svg style="position:absolute;left:6px;top:683px" width="10" height="11"><path d="M6.5 1.5L2.5 5.5L6.5 9.5" stroke="#606060" stroke-width="1.6" fill="none"/></svg>
<div style="position:absolute;left:1330px;top:682px;width:17px;height:14px;background:#cdcdcd;"></div>
<svg style="position:absolute;left:1350px;top:683px" width="10" height="11"><path d="M3.5 1.5L7.5 5.5L3.5 9.5" stroke="#606060" stroke-width="1.6" fill="none"/></svg>
<div style="position:absolute;left:0px;top:697px;width:1362px;height:2px;background:#000;"></div>
<div style="position:absolute;left:1.5px;top:699px;width:1361px;height:30px;background:#f0f0f0;"></div>
<div style="position:absolute;left:1.5px;top:702px;width:1361px;height:1.5px;background:#909090;"></div>
<div style="position:absolute;left:5px;top:704px;width:110px;height:20px;background:#f0f0f0;border-left:1px solid #fff;border-top:1px solid #fff;border-right:1.5px solid #8a8a8a;border-bottom:1.5px solid #8a8a8a;box-sizing:border-box"></div>
<div id="bt0" style="position:absolute;top:705.5px;height:17px;line-height:17px;font-size:13px;color:#000;white-space:pre;left:9.70px;transform-origin:0 50%;transform:scaleX(0.8404);">GBPJPY   1 Min   #5</div>
<div style="position:absolute;left:118px;top:704px;width:103px;height:20px;background:#f0f0f0;border-left:1px solid #fff;border-top:1px solid #fff;border-right:1.5px solid #8a8a8a;border-bottom:1.5px solid #8a8a8a;box-sizing:border-box"></div>
<div id="bt1" style="position:absolute;top:705.5px;height:17px;line-height:17px;font-size:13px;color:#000;white-space:pre;left:123.00px;transform-origin:0 50%;transform:scaleX(0.8646);">EUR-X   1 Min   #1</div>
<div style="position:absolute;left:224px;top:704px;width:119px;height:20px;background:#f0f0f0;border-left:1px solid #fff;border-top:1px solid #fff;border-right:1.5px solid #8a8a8a;border-bottom:1.5px solid #8a8a8a;box-sizing:border-box"></div>
<div id="bt2" style="position:absolute;top:705.5px;height:17px;line-height:17px;font-size:13px;color:#000;white-space:pre;left:229.40px;transform-origin:0 50%;transform:scaleX(0.8793);">AUDCAD   1 Min   #2</div>
<div style="position:absolute;left:344px;top:704px;width:114px;height:20px;background:#f0f0f0;border-left:1px solid #fff;border-top:1px solid #fff;border-right:1.5px solid #8a8a8a;border-bottom:1.5px solid #8a8a8a;box-sizing:border-box"></div>
<div id="bt3" style="position:absolute;top:705.5px;height:17px;line-height:17px;font-size:13px;color:#000;white-space:pre;left:349.80px;transform-origin:0 50%;transform:scaleX(0.8418);">EURUSD   1 Min   #3</div>
<div style="position:absolute;left:460px;top:702px;width:117px;height:23px;background:#0078d7;"></div>
<div style="position:absolute;left:577px;top:702px;width:2px;height:23px;background:#707070;"></div>
<div id="bt4" style="position:absolute;top:705.0px;height:17px;line-height:17px;font-size:13px;color:#fff;white-space:pre;left:465.80px;transform-origin:0 50%;transform:scaleX(0.8549);">EURGBP   1 Min   #4</div>
<div style="position:absolute;left:0px;top:724px;width:1362px;height:3px;background:#f8f8f8;"></div>
<div style="position:absolute;left:0px;top:727px;width:1362px;height:2px;background:#202020;"></div>
<div style="position:absolute;left:0px;top:99px;width:427px;height:373px;background:#fff;"></div>
<div style="position:absolute;left:0px;top:99px;width:427px;height:1px;background:#1e7ad2;"></div>
<div style="position:absolute;left:426px;top:99px;width:1px;height:373px;background:#3c8ad8;"></div>
<div style="position:absolute;left:0px;top:469px;width:427px;height:2px;background:#dcdcdc;"></div>
<div style="position:absolute;left:0px;top:471px;width:427px;height:1px;background:#3c8ad8;"></div>
<svg style="position:absolute;left:2px;top:107px" width="16" height="14"><defs><linearGradient id="wg" x1="0" y1="0" x2="0" y2="1"><stop offset="0" stop-color="#5a8ed0"/><stop offset="1" stop-color="#4caf50"/></linearGradient></defs><rect x="0.5" y="0.5" width="14" height="12" fill="#fff" stroke="#b4b4b4"/><rect x="2" y="3" width="5" height="7.5" fill="url(#wg)"/><rect x="7.5" y="2" width="3.5" height="9" fill="#e4e4e4"/><rect x="12" y="3" width="2" height="4" fill="url(#wg)"/></svg>
<div id="wtitle" style="position:absolute;top:107.0px;height:16.5px;line-height:16.5px;font-size:12.5px;color:#000;white-space:pre;left:23.00px;transform-origin:0 50%;transform:scaleX(0.9021);">EURGBP [M]  1 Min   #4</div>
<div style="position:absolute;left:307px;top:114px;width:10px;height:1px;background:#000;"></div>
<div style="position:absolute;left:352px;top:109.5px;width:10px;height:9px;background:transparent;border:1px solid #c4c4c4;box-sizing:border-box"></div>
<svg style="position:absolute;left:397px;top:108px" width="12" height="12"><path d="M0.5 0.5L11 11M11 0.5L0.5 11" stroke="#000" stroke-width="1.1"/></svg>
<div style="position:absolute;left:0px;top:130px;width:424px;height:1.5px;background:#a0a0a0;"></div>
<div style="position:absolute;left:0px;top:131.5px;width:424px;height:25.5px;background:#f0f0f0;"></div>
<div style="position:absolute;left:0px;top:157px;width:424px;height:1px;background:#a0a0a0;"></div>
<div style="position:absolute;left:0px;top:158px;width:424px;height:18px;background:#40ff40;"></div>
<div style="position:absolute;left:297px;top:158px;width:127px;height:18px;background:#ff4040;"></div>
<div style="position:absolute;left:0px;top:176px;width:424px;height:1px;background:#a0a0a0;"></div>
<div style="position:absolute;left:0px;top:177px;width:297px;height:18px;background:#a0ffa0;"></div>
<div style="position:absolute;left:297px;top:177px;width:127px;height:18px;background:#ffa0a0;"></div>
<div style="position:absolute;left:0px;top:195px;width:424px;height:1px;background:#a0a0a0;"></div>
<div style="position:absolute;left:0px;top:214px;width:424px;height:1px;background:#a0a0a0;"></div>
<div style="position:absolute;left:96px;top:131px;width:1.3px;height:338px;background:#a0a0a0;"></div>
<div style="position:absolute;left:196px;top:131px;width:1.3px;height:338px;background:#a0a0a0;"></div>
<div style="position:absolute;left:296px;top:131px;width:1.3px;height:338px;background:#a0a0a0;"></div>
<div style="position:absolute;left:396px;top:131px;width:1.3px;height:338px;background:#a0a0a0;"></div>
<div id="th0" style="position:absolute;top:137.2px;height:16.5px;line-height:16.5px;font-size:12.5px;color:#000;white-space:pre;left:23.15px;transform-origin:0 50%;transform:scaleX(0.9134);">Bid Price</div>
<div id="th1" style="position:absolute;top:137.2px;height:16.5px;line-height:16.5px;font-size:12.5px;color:#000;white-space:pre;left:126.85px;transform-origin:0 50%;transform:scaleX(0.9341);">Bid Qty</div>
<div id="th2" style="position:absolute;top:137.2px;height:16.5px;line-height:16.5px;font-size:12.5px;color:#000;white-space:pre;left:218.50px;transform-origin:0 50%;transform:scaleX(0.9205);">Bid Orders</div>
<div id="th3" style="position:absolute;top:137.2px;height:16.5px;line-height:16.5px;font-size:12.5px;color:#000;white-space:pre;left:321.85px;transform-origin:0 50%;transform:scaleX(0.9148);">Ask Price</div>
<div id="tr0" style="position:absolute;top:158.8px;height:16.5px;line-height:16.5px;font-size:12.5px;color:#fff;white-space:pre;left:54.50px;transform-origin:0 50%;transform:scaleX(0.8520);">0.86232</div>
<div id="tr1" style="position:absolute;top:158.8px;height:16.5px;line-height:16.5px;font-size:12.5px;color:#fff;white-space:pre;right:1169px;">1</div>
<div id="tr2" style="position:absolute;top:158.8px;height:16.5px;line-height:16.5px;font-size:12.5px;color:#fff;white-space:pre;right:1069px;">0</div>
<div id="tr3" style="position:absolute;top:158.8px;height:16.5px;line-height:16.5px;font-size:12.5px;color:#fff;white-space:pre;left:354.50px;transform-origin:0 50%;transform:scaleX(0.8520);">0.86252</div>
<div id="tt0" style="position:absolute;top:177.8px;height:16.5px;line-height:16.5px;font-size:12.5px;color:#fff;white-space:pre;left:68.70px;transform-origin:0 50%;transform:scaleX(0.9202);">Total</div>
<div id="tt1" style="position:absolute;top:177.8px;height:16.5px;line-height:16.5px;font-size:12.5px;color:#fff;white-space:pre;right:1169px;">1</div>
<div id="tt2" style="position:absolute;top:177.8px;height:16.5px;line-height:16.5px;font-size:12.5px;color:#fff;white-space:pre;right:1069px;">0</div>
<div id="tt3" style="position:absolute;top:177.8px;height:16.5px;line-height:16.5px;font-size:12.5px;color:#fff;white-space:pre;left:368.70px;transform-origin:0 50%;transform:scaleX(0.9202);">Total</div>
<div style="position:absolute;left:427px;top:108px;width:9px;height:370px;background:linear-gradient(to right, rgba(0,0,0,0.32), rgba(0,0,0,0.12) 40%, rgba(0,0,0,0));"></div>
<div style="position:absolute;left:0px;top:472px;width:430px;height:6px;background:linear-gradient(to bottom, rgba(0,0,0,0.28), rgba(0,0,0,0));"></div>
</body></html>
